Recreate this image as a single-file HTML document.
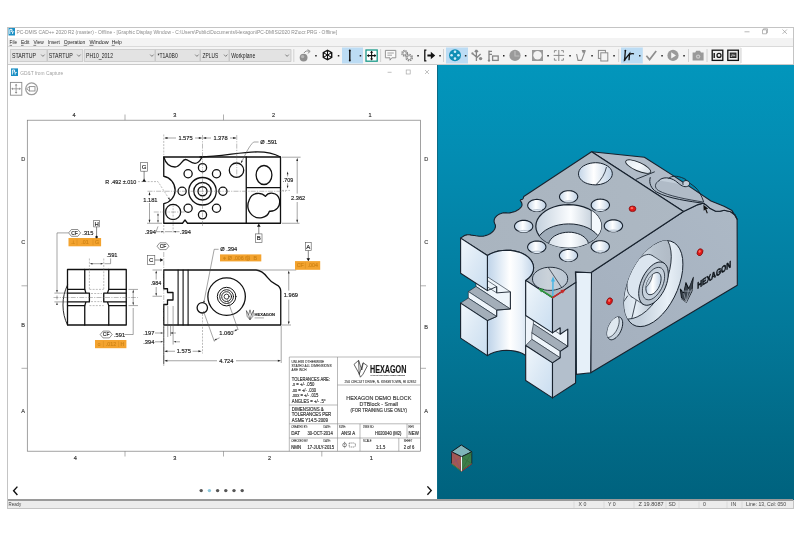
<!DOCTYPE html>
<html><head><meta charset="utf-8"><title>PC-DMIS</title>
<style>
html,body{margin:0;padding:0;background:#fff;}
body{width:800px;height:560px;position:relative;overflow:hidden;font-family:"Liberation Sans",sans-serif;}
.a{position:absolute;}
svg{position:absolute;left:0;top:0;overflow:visible;will-change:transform;}
text{font-family:"Liberation Sans",sans-serif;}
</style></head><body>
<!-- window frame -->
<div class="a" style="left:7px;top:27px;width:787px;height:482px;background:#fff;box-shadow:0 0 0 1px #c4c4c4 inset;"></div>
<div class="a" style="left:8px;top:38px;width:785px;height:8px;background:#f3f3f3;"></div>
<div class="a" style="left:8px;top:46px;width:785px;height:18px;background:#fff;border-top:1px solid #dadada;box-sizing:border-box;"></div>
<div class="a" style="left:8px;top:47px;width:733px;height:17px;background:#f4f4f4;"></div>
<!-- teal viewport -->
<div class="a" style="left:437px;top:65px;width:357px;height:435px;background:linear-gradient(180deg,#0296bc 0%,#038db3 20%,#03799a 60%,#016a87 85%,#00627e 100%);"></div>
<div class="a" style="left:437px;top:65px;width:1px;height:435px;background:#0b6a86;"></div>
<!-- sub window -->
<div class="a" style="left:8px;top:64px;width:785px;height:1px;background:#c9c9c9;"></div>
<div class="a" style="left:8px;top:65px;width:429px;height:435px;background:#fff;"></div>
<!-- status bar -->
<div class="a" style="left:8px;top:499px;width:785px;height:2px;background:#9a9a9a;"></div>
<div class="a" style="left:8px;top:501px;width:785px;height:7px;background:#ececec;"></div>
<svg width="800" height="560" viewBox="0 0 800 560">
<!-- title bar -->
<rect x="8.5" y="28" width="6.5" height="7.5" fill="#1b8fc4"/>
<path d="M9.8 34v-4.6h2.2v2h-1.2M12.6 34v-2.2h1.6" stroke="#fff" stroke-width="0.9" fill="none"/>
<text x="16.5" y="34.2" font-size="5.6" fill="#8a8a8a" textLength="320.5" lengthAdjust="spacingAndGlyphs">PC-DMIS CAD++ 2020 R2 (master) - Offline - [Graphic Display Window - C:\Users\Public\Documents\Hexagon\PC-DMIS\2020 R2\ocr.PRG - Offline]</text>
<g stroke="#9a9a9a" stroke-width="0.7" fill="none">
<path d="M744.5 31.8h5"/>
<path d="M762.5 29.8h4v4h-4zM763.5 29.8v-1h4v4h-1"/>
<path d="M782.5 29.5l4.4 4.4M786.9 29.5l-4.4 4.4"/>
</g>
<!-- menu -->
<g font-size="5.9" fill="#1c1c1c">
<text x="9.6" y="44.4" textLength="7.4" lengthAdjust="spacingAndGlyphs">File</text>
<text x="21" y="44.4" textLength="8.4" lengthAdjust="spacingAndGlyphs">Edit</text>
<text x="33.4" y="44.4" textLength="10.4" lengthAdjust="spacingAndGlyphs">View</text>
<text x="48" y="44.4" textLength="11.8" lengthAdjust="spacingAndGlyphs">Insert</text>
<text x="63.7" y="44.4" textLength="21.6" lengthAdjust="spacingAndGlyphs">Operation</text>
<text x="89.4" y="44.4" textLength="19.4" lengthAdjust="spacingAndGlyphs">Window</text>
<text x="111.7" y="44.4" textLength="10" lengthAdjust="spacingAndGlyphs">Help</text>
</g>
<g stroke="#1c1c1c" stroke-width="0.5"><path d="M9.6 45.4h2.4M21 45.4h2.6M33.4 45.4h2.8M48 45.4h1.2M63.7 45.4h3.4M89.4 45.4h4M111.7 45.4h3"/></g>
<!-- combos -->
<g fill="#e3e3e3" stroke="#b9b9b9" stroke-width="0.6">
<rect x="10.6" y="49.7" width="36.4" height="11.8"/>
<rect x="47.4" y="49.7" width="35.4" height="11.8"/>
<rect x="84.2" y="49.7" width="70.8" height="11.8"/>
<rect x="155.4" y="49.7" width="44.6" height="11.8"/>
<rect x="200.4" y="49.7" width="28.6" height="11.8"/>
<rect x="229.4" y="49.7" width="61.6" height="11.8"/>
</g>
<g font-size="7.8" fill="#222">
<text x="12" y="57.9" textLength="24" lengthAdjust="spacingAndGlyphs">STARTUP</text>
<text x="48.8" y="57.9" textLength="24" lengthAdjust="spacingAndGlyphs">STARTUP</text>
<text x="86" y="57.9" textLength="27" lengthAdjust="spacingAndGlyphs">PH10_2012</text>
<text x="157.5" y="57.9" textLength="20.2" lengthAdjust="spacingAndGlyphs">*T1A0B0</text>
<text x="202.6" y="57.9" textLength="15.6" lengthAdjust="spacingAndGlyphs">ZPLUS</text>
<text x="231.2" y="57.9" textLength="24" lengthAdjust="spacingAndGlyphs">Workplane</text>
</g>
<g stroke="#555" stroke-width="0.7" fill="none">
<path d="M41.2 54.6l1.7 1.8 1.7-1.8"/>
<path d="M77.2 54.6l1.7 1.8 1.7-1.8"/>
<path d="M150.2 54.6l1.7 1.8 1.7-1.8"/>
<path d="M195.2 54.6l1.7 1.8 1.7-1.8"/>
<path d="M224 54.6l1.7 1.8 1.7-1.8"/>
<path d="M285.4 54.6l1.7 1.8 1.7-1.8"/>
</g>
<!-- toolbar highlights -->
<g fill="#bcdcf4">
<rect x="342" y="47.5" width="21" height="16"/>
<rect x="446" y="47.5" width="22" height="16"/>
<rect x="621" y="47.5" width="21.8" height="16"/>
</g>
<!-- separators -->
<g stroke="#c9c9c9" stroke-width="0.8">
<path d="M293.8 49v13M380.6 49v13M443.5 49v13M618.6 49v13M688.5 49v13M707 49v13M741 48v15"/>
</g>
<!-- dropdown dots -->
<g fill="#222">
<rect x="315.2" y="55" width="1.5" height="1.5"/><rect x="337.8" y="55" width="1.5" height="1.5"/><rect x="359.7" y="55" width="1.5" height="1.5"/>
<rect x="417.3" y="55" width="1.5" height="1.5"/><rect x="439.3" y="55" width="1.5" height="1.5"/><rect x="464.9" y="55" width="1.5" height="1.5"/>
<rect x="503" y="55" width="1.5" height="1.5"/><rect x="524.9" y="55" width="1.5" height="1.5"/><rect x="547.3" y="55" width="1.5" height="1.5"/>
<rect x="569.3" y="55" width="1.5" height="1.5"/><rect x="591.3" y="55" width="1.5" height="1.5"/><rect x="613.3" y="55" width="1.5" height="1.5"/>
<rect x="639" y="55" width="1.5" height="1.5"/><rect x="661.3" y="55" width="1.5" height="1.5"/><rect x="683.3" y="55" width="1.5" height="1.5"/>
</g>
<!-- icons -->
<!-- 1 grey ball + arrow -->
<circle cx="303.6" cy="57.6" r="3.9" fill="#8e8e8e"/><circle cx="302.6" cy="56.6" r="1.7" fill="#b5b5b5"/>
<path d="M304 53c1-2 3.5-2.6 5.6-1.6M307.6 49.6l2.6 1.8-2.4 2" stroke="#8e8e8e" stroke-width="1" fill="none"/>
<!-- 2 hex wheel -->
<path d="M327.5 49.4l4.9 2.8v5.6l-4.9 2.8-4.9-2.8v-5.6z" fill="#111"/>
<circle cx="327.5" cy="55" r="3.6" fill="#f4f4f4"/>
<path d="M327.5 51v8M324 53l7 4M331 53l-7 4" stroke="#111" stroke-width="1"/>
<circle cx="327.5" cy="55" r="1.1" fill="#111"/>
<!-- 3 vertical bar -->
<path d="M349.8 50.6v9.6" stroke="#111" stroke-width="1.4"/><circle cx="349.8" cy="50.6" r="1" fill="#111"/><circle cx="349.8" cy="60.4" r="1" fill="#111"/>
<!-- 4 fit -->
<rect x="366" y="50" width="11.2" height="11.2" fill="#fff" stroke="#1a9a8a" stroke-width="1.3"/>
<path d="M371.6 51.6v8M367.6 55.6h8" stroke="#111" stroke-width="1.1"/>
<path d="M371.6 50.8l1.6 2h-3.2zM371.6 60.4l1.6-2h-3.2zM366.9 55.6l2-1.6v3.2zM376.3 55.6l-2-1.6v3.2z" fill="#111"/>
<!-- 5 comment -->
<path d="M385.4 50.4h10.4v7.4h-4l-1.8 2.4v-2.4h-4.6z" fill="#fafafa" stroke="#8a8a8a" stroke-width="0.9"/>
<path d="M387.4 53h6.4M387.4 55.2h4.6" stroke="#8a8a8a" stroke-width="0.8"/>
<!-- 6 gears -->
<g stroke="#8a8a8a" fill="#f4f4f4"><circle cx="404.6" cy="53.2" r="2.7" stroke-width="1.5" stroke-dasharray="1.4 0.8"/><circle cx="404.6" cy="53.2" r="1.7" stroke-width="0.9"/><circle cx="409.2" cy="57.6" r="3.1" stroke-width="1.5" stroke-dasharray="1.5 0.9"/><circle cx="409.2" cy="57.6" r="2" stroke-width="0.9"/></g>
<!-- 7 |-> -->
<path d="M426.4 50.2h-1.6v10.6h1.6" stroke="#111" stroke-width="1.3" fill="none"/><path d="M427.4 55.5h5.4" stroke="#111" stroke-width="2"/><path d="M430.8 51.8l4.4 3.7-4.4 3.7z" fill="#111"/>
<!-- 8 teal circle -->
<circle cx="455" cy="55.2" r="6" fill="#108fb5"/>
<g fill="#cfeefa"><circle cx="455" cy="51.8" r="1.3"/><circle cx="455" cy="58.6" r="1.3"/><circle cx="451.6" cy="55.2" r="1.3"/><circle cx="458.4" cy="55.2" r="1.3"/></g>
<!-- 9 usb-like -->
<g stroke="#858585" stroke-width="1.3" fill="none"><path d="M476.4 50v11M476.4 50l-1.6 2M476.4 50l1.6 2M472.4 53.6l4 3.4M480.6 54l-4.2 4"/></g><circle cx="480.6" cy="58.6" r="1.7" fill="#8a8a8a"/><circle cx="472.4" cy="53.4" r="1.1" fill="#8a8a8a"/>
<!-- 10 probe/flag -->
<g stroke="#858585" stroke-width="1.3" fill="none"><path d="M489 50.4v10.4M489 51.4h3M489 54.4h3"/><rect x="492.6" y="56" width="5.6" height="4.4"/></g><circle cx="489" cy="60.6" r="1.2" fill="#8a8a8a"/>
<!-- 11 grey sphere -->
<circle cx="515" cy="55.4" r="5.6" fill="#9a9a9a"/><path d="M515 51v5h4.4" stroke="#bdbdbd" stroke-width="1.2" fill="none"/>
<!-- 12 square -->
<rect x="532" y="50" width="11" height="11" fill="#9a9a9a"/><circle cx="537.5" cy="55.2" r="4.2" fill="#f4f4f4"/>
<!-- 13 grid -->
<g stroke="#8a8a8a" stroke-width="1" fill="none"><path d="M558.8 50v11M553.6 55.4h10.6M554.4 52.6v-2h2.2M563.4 52.6v-2h-2.2M554.4 58.2v2h2.2M563.4 58.2v2h-2.2"/></g>
<!-- 14 path -->
<g stroke="#8a8a8a" stroke-width="1.1" fill="none"><path d="M576.6 54l1.4 6.4h3.6l3.6-9.6"/></g><path d="M581.6 50h4.4l-3 3.6z" fill="#8a8a8a"/>
<!-- 15 copy -->
<g stroke="#8a8a8a" stroke-width="1" fill="#f4f4f4"><rect x="598.4" y="50.4" width="7" height="8"/><rect x="600.8" y="52.8" width="7" height="8.2"/></g>
<!-- 16 lr -->
<path d="M625.4 50.4l-0.8 9.6 5-6.4-0.6 6.6M629.4 54.4c1.6-1 3-1 4.6-0.6" stroke="#111" stroke-width="1.3" fill="none"/><circle cx="625.4" cy="50.6" r="0.9" fill="#111"/><circle cx="624.6" cy="60" r="0.9" fill="#111"/>
<!-- 17 check -->
<path d="M646.4 55.8l3.2 3.8 6.6-8.6" stroke="#8e8e8e" stroke-width="1.7" fill="none"/>
<!-- 18 play -->
<circle cx="673" cy="55.4" r="5.6" fill="#9a9a9a"/><path d="M671.2 52.2l4.8 3.2-4.8 3.2z" fill="#f4f4f4"/>
<!-- 19 camera -->
<path d="M692.6 52.4h2.6l1-1.6h3.8l1 1.6h2.6v8.2h-11z" fill="#9a9a9a"/><circle cx="698.1" cy="56.6" r="2.2" fill="#c9c9c9"/><circle cx="698.1" cy="56.6" r="0.9" fill="#9a9a9a"/>
<!-- 20,21 -->
<rect x="712.2" y="50.2" width="10.6" height="10.2" fill="#ededed" stroke="#111" stroke-width="1.3"/>
<path d="M714.2 53v5" stroke="#111" stroke-width="1.4"/><circle cx="719" cy="55.4" r="2" fill="none" stroke="#111" stroke-width="1.2"/>
<rect x="727.8" y="50.2" width="10.6" height="10.2" fill="#ededed" stroke="#111" stroke-width="1.3"/>
<rect x="730.2" y="53" width="5.8" height="4.6" fill="#555" stroke="#111" stroke-width="0.8"/><path d="M731 57l1.8-2.4 1.4 1.4 1-1" stroke="#eee" stroke-width="0.6" fill="none"/>
<!-- sub-window title -->
<rect x="11" y="68.4" width="7" height="7.6" fill="#1b8fc4"/>
<path d="M12.4 74.6v-4.6h2.2v2h-1.2M15.2 74.6v-2.2h1.6" stroke="#fff" stroke-width="0.9" fill="none"/>
<text x="20.2" y="74.6" font-size="5.4" fill="#a2a2a2" textLength="43" lengthAdjust="spacingAndGlyphs">GD&amp;T from Capture</text>
<g stroke="#a8a8a8" stroke-width="0.7" fill="none">
<path d="M387.6 72.3h4"/><rect x="406.2" y="70" width="4" height="4"/><path d="M425 70l4 4M429 70l-4 4"/>
</g>
<!-- pan + rotate icons -->
<rect x="10.4" y="82.4" width="11.4" height="12.8" fill="#fff" stroke="#8c8c8c" stroke-width="0.9"/>
<path d="M16.1 84.6v8.4M12 88.8h8.2" stroke="#8c8c8c" stroke-width="0.8"/>
<path d="M16.1 83.8l1.3 1.7h-2.6zM16.1 93.8l1.3-1.7h-2.6zM11.2 88.8l1.7-1.3v2.6zM21 88.8l-1.7-1.3v2.6z" fill="#8c8c8c"/>
<circle cx="31.6" cy="88.8" r="5.9" fill="#fff" stroke="#9c9c9c" stroke-width="1.3"/>
<rect x="29.4" y="86.6" width="5.6" height="4.4" fill="#fff" stroke="#8c8c8c" stroke-width="0.9"/>
<path d="M26.6 88.8l2.8-2.2M26.6 88.8l2.8 2.2" stroke="#8c8c8c" stroke-width="0.8"/>
<!-- nav arrows -->
<path d="M17.4 486.6l-3.8 4.2 3.8 4.2" stroke="#111" stroke-width="1.4" fill="none"/>
<path d="M427.4 486.4l3.8 4.2-3.8 4.2" stroke="#111" stroke-width="1.4" fill="none"/>
<!-- pager dots -->
<g fill="#555"><circle cx="201.2" cy="490.6" r="1.7"/><circle cx="217.6" cy="490.6" r="1.7"/><circle cx="225.8" cy="490.6" r="1.7"/><circle cx="234" cy="490.6" r="1.7"/><circle cx="242.2" cy="490.6" r="1.7"/></g>
<circle cx="209.4" cy="490.6" r="1.7" fill="#8cc8dc"/>
<!-- status bar -->
<g font-size="5.2" fill="#444">
<text x="8.6" y="506.4" textLength="12.6" lengthAdjust="spacingAndGlyphs">Ready</text>
<text x="578.6" y="506.4">X 0</text>
<text x="608" y="506.4">Y 0</text>
<text x="638.6" y="506.4" textLength="25" lengthAdjust="spacingAndGlyphs">Z 19.8087</text>
<text x="668.6" y="506.4" textLength="7" lengthAdjust="spacingAndGlyphs">SD</text>
<text x="703" y="506.4">0</text>
<text x="731" y="506.4">IN</text>
<text x="746" y="506.4" textLength="40" lengthAdjust="spacingAndGlyphs">Line: 13, Col: 050</text>
</g>
<g stroke="#d0d0d0" stroke-width="0.6"><path d="M574 501.5v6.5M604 501.5v6.5M634 501.5v6.5M666 501.5v6.5M679 501.5v6.5M699 501.5v6.5M727 501.5v6.5M742 501.5v6.5"/></g>
</svg>

<svg width="800" height="560" viewBox="0 0 800 560">
<defs>
<linearGradient id="gEnd" x1="0" y1="0" x2="1" y2="1"><stop offset="0" stop-color="#f1f7fc"/><stop offset="0.5" stop-color="#dce9f5"/><stop offset="1" stop-color="#c9ddf0"/></linearGradient>
<linearGradient id="gCyl" gradientUnits="userSpaceOnUse" x1="487" y1="0" x2="533" y2="0"><stop offset="0" stop-color="#bdd2e8"/><stop offset="0.2" stop-color="#d6e4f2"/><stop offset="0.5" stop-color="#ffffff"/><stop offset="0.75" stop-color="#e9f1f9"/><stop offset="1" stop-color="#c4d6e9"/></linearGradient>
<linearGradient id="gRight" gradientUnits="userSpaceOnUse" x1="553" y1="380" x2="737" y2="220"><stop offset="0" stop-color="#a2aebc"/><stop offset="0.5" stop-color="#a7b3c1"/><stop offset="1" stop-color="#acb8c5"/></linearGradient>
<linearGradient id="gTop" gradientUnits="userSpaceOnUse" x1="461" y1="240" x2="680" y2="180"><stop offset="0" stop-color="#a9b4bf"/><stop offset="1" stop-color="#adb8c3"/></linearGradient>
<linearGradient id="gHole" x1="0" y1="0" x2="1" y2="0"><stop offset="0" stop-color="#c3d5e8"/><stop offset="0.45" stop-color="#ffffff"/><stop offset="1" stop-color="#bccfe3"/></linearGradient>
<linearGradient id="gBore" gradientUnits="userSpaceOnUse" x1="535" y1="0" x2="600" y2="0"><stop offset="0" stop-color="#c2cfdc"/><stop offset="0.55" stop-color="#fbfdff"/><stop offset="1" stop-color="#b4c2d0"/></linearGradient>
</defs>
<polygon points="590.7,272.7 683.5,211.5 698.0,204.6 702.8,203.2 706.0,204.8 710.3,208.6 715.7,211.2 720.0,211.3 724.2,210.2 730.7,211.8 735.0,215.0 737.1,219.3 737.3,285.2 590.7,372.7" fill="url(#gRight)" stroke="#18222e" stroke-width="1.1" stroke-linejoin="round" />
<polygon points="575.8,272.5 591.5,272.5 590.7,372.7 576.4,374.4" fill="#e6f0f9" stroke="#18222e" stroke-width="1.1" stroke-linejoin="round" />
<polygon points="591.6,151.7 644.4,157.2 673.6,175.9 693.0,188.9 711.0,201.0 724.0,206.3 732.0,210.4 737.1,219.3 735.0,215.0 730.7,211.8 724.2,210.2 720.0,211.3 715.7,211.2 710.3,208.6 706.0,204.8 702.8,203.2 698.0,204.6 683.5,211.5" fill="#b0bbc7" stroke="#18222e" stroke-width="1.1" stroke-linejoin="round" />
<polygon points="460.6,238.1 464.5,235.5 464.9,235.4 465.3,235.3 465.9,235.1 466.6,234.9 467.3,234.8 468.0,234.7 468.7,234.8 469.5,234.8 470.3,234.9 471.2,235.1 472.2,235.2 473.3,235.4 474.5,235.5 476.0,235.8 477.5,236.0 479.1,236.2 480.7,236.3 482.1,236.3 483.5,236.1 484.8,235.8 486.1,235.4 487.4,235.0 488.6,234.5 489.6,233.9 490.6,233.4 491.4,232.8 492.2,232.1 492.9,231.5 493.5,230.8 494.0,230.1 494.5,229.5 494.8,228.8 495.1,228.1 495.3,227.5 495.4,226.8 495.5,226.1 495.4,225.3 495.2,224.6 494.8,223.8 494.5,223.1 494.3,222.3 494.1,221.6 494.1,220.9 494.2,220.2 494.3,219.6 494.5,218.9 494.8,218.3 495.1,217.7 495.6,217.1 496.1,216.5 496.7,215.9 497.4,215.4 498.1,214.9 498.8,214.4 499.5,214.1 500.3,213.7 501.0,213.5 501.8,213.2 502.6,213.0 503.5,212.9 504.4,212.8 505.4,212.9 506.4,212.9 507.4,213.0 508.5,213.0 509.6,212.9 510.8,212.6 512.2,212.3 513.5,211.9 514.9,211.4 516.1,210.9 517.2,210.3 518.2,209.8 519.1,209.1 519.9,208.4 520.6,207.7 521.2,207.0 521.6,206.3 521.9,205.7 522.0,205.0 522.0,204.4 521.9,203.8 521.8,203.2 521.6,202.7 521.4,202.2 521.1,201.8 520.8,201.4 520.5,201.0 520.3,200.6 520.3,200.3 520.5,200.0 520.9,199.8 521.4,199.6 521.9,199.4 522.4,199.2 522.8,198.9 523.1,198.5 523.3,198.1 523.4,197.6 523.6,197.1 523.7,196.7 523.8,196.5 591.6,151.7 683.5,211.5 590.7,272.7 575.4,271.9 575.9,282.4 552.5,297.9 525.7,280.4 528.4,278.3 530.7,275.9 532.3,273.3 533.3,270.6 533.6,267.8 533.3,265.1 532.3,262.4 530.7,259.8 528.5,257.4 525.7,255.3 522.5,253.5 518.9,252.1 514.9,251.1 510.8,250.4 506.6,250.2 502.3,250.5 498.2,251.1 494.3,252.2 490.6,253.7 487.4,255.5" fill="url(#gTop)" stroke="#18222e" stroke-width="1.1" stroke-linejoin="round" />
<polygon points="525.7,280.4 528.4,278.3 530.7,275.9 532.3,273.3 533.3,270.6 533.6,267.8 533.3,265.1 532.3,262.4 530.7,259.8 528.5,257.4 525.7,255.3 522.5,253.5 518.9,252.1 514.9,251.1 510.8,250.4 506.6,250.2 502.3,250.5 498.2,251.1 494.3,252.2 490.6,253.7 487.4,255.5 487.4,355.6 490.6,353.7 494.3,352.3 498.2,351.2 502.3,350.5 506.6,350.3 510.8,350.5 514.9,351.1 518.9,352.1 522.5,353.6 525.7,355.4 528.5,357.5 530.7,359.8 532.3,362.4 533.3,365.1 533.6,367.9 533.3,370.6 532.3,373.4 530.7,375.9 528.4,378.3 525.7,380.5" fill="url(#gCyl)" stroke="#18222e" stroke-width="1.1" stroke-linejoin="round" />
<polygon points="476.0,269.4 510.4,291.8 510.4,309.0 476.0,286.5" fill="#eef5fb" stroke="#18222e" stroke-width="0.6" stroke-linejoin="round" />
<polygon points="468.3,268.1 496.7,286.6 496.7,292.9 468.3,274.4" fill="#eef5fb" stroke="#18222e" stroke-width="0.6" stroke-linejoin="round" />
<polygon points="476.0,286.5 510.4,309.0 496.7,310.1 468.3,291.6" fill="#a3aeb9" stroke="#18222e" stroke-width="0.6" stroke-linejoin="round" />
<polygon points="468.3,291.6 496.7,310.1 496.7,316.5 468.3,298.1" fill="#eef5fb" stroke="#18222e" stroke-width="0.6" stroke-linejoin="round" />
<polygon points="468.3,298.1 496.7,316.5 487.4,320.6 460.6,303.1" fill="#a3aeb9" stroke="#18222e" stroke-width="0.6" stroke-linejoin="round" />
<polygon points="460.6,238.1 487.4,255.5 487.4,290.6 460.6,273.2" fill="url(#gEnd)" stroke="#18222e" stroke-width="1.1" stroke-linejoin="round" />
<polygon points="460.6,303.1 487.4,320.6 487.4,355.6 460.6,338.1" fill="url(#gEnd)" stroke="#18222e" stroke-width="1.1" stroke-linejoin="round" />
<path d="M487.4,290.6 L496.7,286.6 L496.7,292.9 L510.4,291.8 L510.4,309.0 L496.7,310.1 L496.7,316.5 L487.4,320.6" fill="none" stroke="#18222e" stroke-width="0.9" stroke-linejoin="round" stroke-linecap="round" />
<polygon points="525.7,315.5 552.5,332.9 560.2,327.8 560.2,334.2 567.8,329.1 567.8,346.3 560.2,351.4 560.2,357.8 552.5,362.9 525.7,345.5" fill="#eef4fa" stroke="none" stroke-width="0" stroke-linejoin="round" />
<polygon points="533.4,306.7 567.8,329.1 567.8,346.3 533.4,323.9" fill="#eef5fb" stroke="#18222e" stroke-width="0.6" stroke-linejoin="round" />
<polygon points="531.8,309.4 560.2,327.8 560.2,334.2 531.8,315.7" fill="#eef5fb" stroke="#18222e" stroke-width="0.6" stroke-linejoin="round" />
<polygon points="533.4,323.9 567.8,346.3 560.2,351.4 531.8,332.9" fill="#a3aeb9" stroke="#18222e" stroke-width="0.6" stroke-linejoin="round" />
<polygon points="531.8,332.9 560.2,351.4 560.2,357.8 531.8,339.3" fill="#eef5fb" stroke="#18222e" stroke-width="0.6" stroke-linejoin="round" />
<polygon points="531.8,339.3 560.2,357.8 552.5,362.9 525.7,345.5" fill="#a3aeb9" stroke="#18222e" stroke-width="0.6" stroke-linejoin="round" />
<polygon points="525.7,280.4 552.5,297.9 552.5,332.9 525.7,315.5" fill="url(#gEnd)" stroke="#18222e" stroke-width="1.1" stroke-linejoin="round" />
<polygon points="525.7,345.5 552.5,362.9 552.5,397.9 525.7,380.5" fill="url(#gEnd)" stroke="#18222e" stroke-width="1.1" stroke-linejoin="round" />
<polygon points="552.5,297.9 575.9,282.4 575.6,383.0 552.5,397.9 552.5,362.9 560.2,357.8 560.2,351.4 567.8,346.3 567.8,329.1 560.2,334.2 560.2,327.8 552.5,332.9" fill="#b3bfcc" stroke="#18222e" stroke-width="1.1" stroke-linejoin="round" />
<polygon points="606.8,200.8 607.7,201.5 608.5,202.3 609.0,203.2 609.4,204.1 609.5,205.1 609.4,206.0 609.0,206.9 608.5,207.8 607.7,208.6 606.8,209.3 605.7,209.9 604.5,210.4 603.2,210.8 601.8,211.0 600.3,211.1 598.9,211.0 597.5,210.8 596.2,210.5 595.0,210.0 593.9,209.4 592.9,208.7 592.2,207.9 591.6,207.0 591.3,206.1 591.2,205.1 591.3,204.2 591.6,203.3 592.2,202.4 592.9,201.6 593.9,200.9 595.0,200.3 596.2,199.8 597.5,199.4 598.9,199.2 600.3,199.1 601.8,199.2 603.2,199.4 604.5,199.7 605.7,200.2" fill="url(#gHole)" stroke="#18222e" stroke-width="1.1" stroke-linejoin="round" />
<clipPath id="c1"><polygon points="606.8,200.8 607.7,201.5 608.5,202.3 609.0,203.2 609.4,204.1 609.5,205.1 609.4,206.0 609.0,206.9 608.5,207.8 607.7,208.6 606.8,209.3 605.7,209.9 604.5,210.4 603.2,210.8 601.8,211.0 600.3,211.1 598.9,211.0 597.5,210.8 596.2,210.5 595.0,210.0 593.9,209.4 592.9,208.7 592.2,207.9 591.6,207.0 591.3,206.1 591.2,205.1 591.3,204.2 591.6,203.3 592.2,202.4 592.9,201.6 593.9,200.9 595.0,200.3 596.2,199.8 597.5,199.4 598.9,199.2 600.3,199.1 601.8,199.2 603.2,199.4 604.5,199.7 605.7,200.2"/></clipPath>
<polygon points="606.8,211.0 607.7,211.7 608.5,212.5 609.0,213.4 609.4,214.3 609.5,215.2 609.4,216.1 609.0,217.1 608.5,217.9 607.7,218.7 606.8,219.5 605.7,220.1 604.5,220.6 603.2,220.9 601.8,221.2 600.3,221.2 598.9,221.2 597.5,221.0 596.2,220.6 595.0,220.1 593.9,219.5 592.9,218.8 592.2,218.0 591.6,217.2 591.3,216.2 591.2,215.3 591.3,214.4 591.6,213.5 592.2,212.6 592.9,211.8 593.9,211.1 595.0,210.4 596.2,209.9 597.5,209.6 598.9,209.4 600.3,209.3 601.8,209.3 603.2,209.6 604.5,209.9 605.7,210.4" fill="#e3edf7" stroke="#7f8fa0" stroke-width="0.5" stroke-linejoin="round" clip-path="url(#c1)"/>
<polygon points="619.9,221.5 620.9,222.3 621.6,223.1 622.1,223.9 622.5,224.8 622.6,225.8 622.5,226.7 622.1,227.6 621.6,228.5 620.8,229.3 619.9,230.0 618.8,230.6 617.6,231.1 616.3,231.5 614.9,231.7 613.4,231.8 612.0,231.7 610.6,231.5 609.3,231.2 608.1,230.7 607.0,230.1 606.0,229.4 605.3,228.6 604.7,227.7 604.4,226.8 604.3,225.9 604.4,224.9 604.8,224.0 605.3,223.1 606.1,222.3 607.0,221.6 608.1,221.0 609.3,220.5 610.6,220.1 612.0,219.9 613.5,219.8 614.9,219.9 616.3,220.1 617.6,220.5 618.8,220.9" fill="url(#gHole)" stroke="#18222e" stroke-width="1.1" stroke-linejoin="round" />
<clipPath id="c2"><polygon points="619.9,221.5 620.9,222.3 621.6,223.1 622.1,223.9 622.5,224.8 622.6,225.8 622.5,226.7 622.1,227.6 621.6,228.5 620.8,229.3 619.9,230.0 618.8,230.6 617.6,231.1 616.3,231.5 614.9,231.7 613.4,231.8 612.0,231.7 610.6,231.5 609.3,231.2 608.1,230.7 607.0,230.1 606.0,229.4 605.3,228.6 604.7,227.7 604.4,226.8 604.3,225.9 604.4,224.9 604.8,224.0 605.3,223.1 606.1,222.3 607.0,221.6 608.1,221.0 609.3,220.5 610.6,220.1 612.0,219.9 613.5,219.8 614.9,219.9 616.3,220.1 617.6,220.5 618.8,220.9"/></clipPath>
<polygon points="619.9,231.7 620.9,232.4 621.6,233.2 622.1,234.1 622.5,235.0 622.6,235.9 622.5,236.9 622.1,237.8 621.6,238.7 620.8,239.5 619.9,240.2 618.8,240.8 617.6,241.3 616.3,241.7 614.9,241.9 613.4,242.0 612.0,241.9 610.6,241.7 609.3,241.3 608.1,240.8 607.0,240.2 606.0,239.5 605.3,238.7 604.7,237.9 604.4,237.0 604.3,236.0 604.4,235.1 604.8,234.2 605.3,233.3 606.1,232.5 607.0,231.8 608.1,231.2 609.3,230.7 610.6,230.3 612.0,230.1 613.5,230.0 614.9,230.1 616.3,230.3 617.6,230.6 618.8,231.1" fill="#e3edf7" stroke="#7f8fa0" stroke-width="0.5" stroke-linejoin="round" clip-path="url(#c2)"/>
<polygon points="606.7,242.4 607.7,243.1 608.4,243.9 609.0,244.8 609.3,245.7 609.4,246.6 609.3,247.6 608.9,248.5 608.4,249.3 607.6,250.1 606.7,250.9 605.6,251.5 604.4,252.0 603.1,252.3 601.7,252.6 600.2,252.7 598.8,252.6 597.4,252.4 596.1,252.0 594.9,251.5 593.8,250.9 592.9,250.2 592.1,249.4 591.6,248.6 591.2,247.6 591.1,246.7 591.2,245.8 591.6,244.9 592.1,244.0 592.9,243.2 593.8,242.5 594.9,241.8 596.1,241.4 597.4,241.0 598.8,240.8 600.3,240.7 601.7,240.7 603.1,241.0 604.4,241.3 605.6,241.8" fill="url(#gHole)" stroke="#18222e" stroke-width="1.1" stroke-linejoin="round" />
<clipPath id="c3"><polygon points="606.7,242.4 607.7,243.1 608.4,243.9 609.0,244.8 609.3,245.7 609.4,246.6 609.3,247.6 608.9,248.5 608.4,249.3 607.6,250.1 606.7,250.9 605.6,251.5 604.4,252.0 603.1,252.3 601.7,252.6 600.2,252.7 598.8,252.6 597.4,252.4 596.1,252.0 594.9,251.5 593.8,250.9 592.9,250.2 592.1,249.4 591.6,248.6 591.2,247.6 591.1,246.7 591.2,245.8 591.6,244.9 592.1,244.0 592.9,243.2 593.8,242.5 594.9,241.8 596.1,241.4 597.4,241.0 598.8,240.8 600.3,240.7 601.7,240.7 603.1,241.0 604.4,241.3 605.6,241.8"/></clipPath>
<polygon points="606.7,252.6 607.7,253.3 608.4,254.1 609.0,254.9 609.3,255.8 609.4,256.8 609.3,257.7 608.9,258.6 608.4,259.5 607.6,260.3 606.7,261.0 605.6,261.6 604.4,262.1 603.1,262.5 601.7,262.7 600.2,262.8 598.8,262.7 597.4,262.5 596.1,262.2 594.9,261.7 593.8,261.1 592.9,260.4 592.1,259.6 591.6,258.7 591.2,257.8 591.1,256.9 591.2,255.9 591.6,255.0 592.1,254.1 592.9,253.3 593.8,252.6 594.9,252.0 596.1,251.5 597.4,251.1 598.8,250.9 600.3,250.8 601.7,250.9 603.1,251.1 604.4,251.5 605.6,252.0" fill="#e3edf7" stroke="#7f8fa0" stroke-width="0.5" stroke-linejoin="round" clip-path="url(#c3)"/>
<polygon points="575.0,251.2 575.9,251.9 576.6,252.7 577.2,253.5 577.5,254.5 577.6,255.4 577.5,256.3 577.2,257.2 576.6,258.1 575.9,258.9 575.0,259.6 573.9,260.3 572.6,260.7 571.3,261.1 569.9,261.3 568.5,261.4 567.1,261.4 565.7,261.1 564.3,260.8 563.1,260.3 562.0,259.7 561.1,259.0 560.3,258.2 559.8,257.3 559.5,256.4 559.4,255.5 559.5,254.5 559.8,253.6 560.4,252.8 561.1,252.0 562.0,251.2 563.1,250.6 564.4,250.1 565.7,249.8 567.1,249.5 568.5,249.4 569.9,249.5 571.3,249.7 572.7,250.1 573.9,250.6" fill="url(#gHole)" stroke="#18222e" stroke-width="1.1" stroke-linejoin="round" />
<clipPath id="c4"><polygon points="575.0,251.2 575.9,251.9 576.6,252.7 577.2,253.5 577.5,254.5 577.6,255.4 577.5,256.3 577.2,257.2 576.6,258.1 575.9,258.9 575.0,259.6 573.9,260.3 572.6,260.7 571.3,261.1 569.9,261.3 568.5,261.4 567.1,261.4 565.7,261.1 564.3,260.8 563.1,260.3 562.0,259.7 561.1,259.0 560.3,258.2 559.8,257.3 559.5,256.4 559.4,255.5 559.5,254.5 559.8,253.6 560.4,252.8 561.1,252.0 562.0,251.2 563.1,250.6 564.4,250.1 565.7,249.8 567.1,249.5 568.5,249.4 569.9,249.5 571.3,249.7 572.7,250.1 573.9,250.6"/></clipPath>
<polygon points="575.0,261.3 575.9,262.0 576.6,262.8 577.2,263.7 577.5,264.6 577.6,265.5 577.5,266.5 577.2,267.4 576.6,268.3 575.9,269.1 575.0,269.8 573.9,270.4 572.6,270.9 571.3,271.3 569.9,271.5 568.5,271.6 567.1,271.5 565.7,271.3 564.3,271.0 563.1,270.5 562.0,269.9 561.1,269.2 560.3,268.4 559.8,267.5 559.5,266.6 559.4,265.6 559.5,264.7 559.8,263.8 560.4,262.9 561.1,262.1 562.0,261.4 563.1,260.8 564.4,260.3 565.7,259.9 567.1,259.7 568.5,259.6 569.9,259.7 571.3,259.9 572.7,260.2 573.9,260.7" fill="#e3edf7" stroke="#7f8fa0" stroke-width="0.5" stroke-linejoin="round" clip-path="url(#c4)"/>
<polygon points="543.2,242.7 544.2,243.4 544.9,244.2 545.5,245.1 545.8,246.0 545.9,246.9 545.8,247.9 545.5,248.8 544.9,249.7 544.2,250.5 543.2,251.2 542.1,251.8 540.9,252.3 539.6,252.7 538.2,252.9 536.8,253.0 535.3,252.9 533.9,252.7 532.6,252.3 531.4,251.9 530.3,251.3 529.4,250.5 528.6,249.8 528.1,248.9 527.7,248.0 527.6,247.0 527.7,246.1 528.1,245.2 528.6,244.3 529.4,243.5 530.3,242.8 531.4,242.2 532.6,241.7 534.0,241.3 535.3,241.1 536.8,241.0 538.2,241.1 539.6,241.3 540.9,241.6 542.2,242.1" fill="url(#gHole)" stroke="#18222e" stroke-width="1.1" stroke-linejoin="round" />
<clipPath id="c5"><polygon points="543.2,242.7 544.2,243.4 544.9,244.2 545.5,245.1 545.8,246.0 545.9,246.9 545.8,247.9 545.5,248.8 544.9,249.7 544.2,250.5 543.2,251.2 542.1,251.8 540.9,252.3 539.6,252.7 538.2,252.9 536.8,253.0 535.3,252.9 533.9,252.7 532.6,252.3 531.4,251.9 530.3,251.3 529.4,250.5 528.6,249.8 528.1,248.9 527.7,248.0 527.6,247.0 527.7,246.1 528.1,245.2 528.6,244.3 529.4,243.5 530.3,242.8 531.4,242.2 532.6,241.7 534.0,241.3 535.3,241.1 536.8,241.0 538.2,241.1 539.6,241.3 540.9,241.6 542.2,242.1"/></clipPath>
<polygon points="543.2,252.9 544.2,253.6 544.9,254.4 545.5,255.3 545.8,256.2 545.9,257.1 545.8,258.0 545.5,259.0 544.9,259.8 544.2,260.6 543.2,261.4 542.1,262.0 540.9,262.5 539.6,262.8 538.2,263.1 536.8,263.1 535.3,263.1 533.9,262.9 532.6,262.5 531.4,262.0 530.3,261.4 529.4,260.7 528.6,259.9 528.1,259.0 527.7,258.1 527.6,257.2 527.7,256.3 528.1,255.3 528.6,254.5 529.4,253.7 530.3,253.0 531.4,252.3 532.6,251.8 534.0,251.5 535.3,251.2 536.8,251.2 538.2,251.2 539.6,251.4 540.9,251.8 542.2,252.3" fill="#e3edf7" stroke="#7f8fa0" stroke-width="0.5" stroke-linejoin="round" clip-path="url(#c5)"/>
<polygon points="530.1,222.0 531.1,222.7 531.8,223.5 532.4,224.4 532.7,225.3 532.8,226.2 532.7,227.2 532.4,228.1 531.8,229.0 531.1,229.8 530.1,230.5 529.0,231.1 527.8,231.6 526.5,232.0 525.1,232.2 523.6,232.3 522.2,232.2 520.8,232.0 519.5,231.6 518.3,231.1 517.2,230.5 516.3,229.8 515.5,229.0 515.0,228.2 514.6,227.3 514.5,226.3 514.6,225.4 515.0,224.5 515.5,223.6 516.3,222.8 517.2,222.1 518.3,221.5 519.5,221.0 520.8,220.6 522.2,220.4 523.7,220.3 525.1,220.4 526.5,220.6 527.8,220.9 529.0,221.4" fill="url(#gHole)" stroke="#18222e" stroke-width="1.1" stroke-linejoin="round" />
<clipPath id="c6"><polygon points="530.1,222.0 531.1,222.7 531.8,223.5 532.4,224.4 532.7,225.3 532.8,226.2 532.7,227.2 532.4,228.1 531.8,229.0 531.1,229.8 530.1,230.5 529.0,231.1 527.8,231.6 526.5,232.0 525.1,232.2 523.6,232.3 522.2,232.2 520.8,232.0 519.5,231.6 518.3,231.1 517.2,230.5 516.3,229.8 515.5,229.0 515.0,228.2 514.6,227.3 514.5,226.3 514.6,225.4 515.0,224.5 515.5,223.6 516.3,222.8 517.2,222.1 518.3,221.5 519.5,221.0 520.8,220.6 522.2,220.4 523.7,220.3 525.1,220.4 526.5,220.6 527.8,220.9 529.0,221.4"/></clipPath>
<polygon points="530.1,232.2 531.1,232.9 531.8,233.7 532.4,234.5 532.7,235.5 532.8,236.4 532.7,237.3 532.4,238.2 531.8,239.1 531.1,239.9 530.1,240.6 529.0,241.3 527.8,241.7 526.5,242.1 525.1,242.3 523.6,242.4 522.2,242.4 520.8,242.1 519.5,241.8 518.3,241.3 517.2,240.7 516.3,240.0 515.5,239.2 515.0,238.3 514.6,237.4 514.5,236.5 514.6,235.5 515.0,234.6 515.5,233.8 516.3,233.0 517.2,232.2 518.3,231.6 519.5,231.1 520.8,230.8 522.2,230.5 523.7,230.4 525.1,230.5 526.5,230.7 527.8,231.1 529.0,231.6" fill="#e3edf7" stroke="#7f8fa0" stroke-width="0.5" stroke-linejoin="round" clip-path="url(#c6)"/>
<polygon points="543.3,201.2 544.3,201.9 545.0,202.7 545.5,203.5 545.9,204.4 546.0,205.4 545.9,206.3 545.5,207.2 545.0,208.1 544.2,208.9 543.3,209.6 542.2,210.2 541.0,210.7 539.7,211.1 538.3,211.3 536.8,211.4 535.4,211.3 534.0,211.1 532.7,210.8 531.5,210.3 530.4,209.7 529.4,209.0 528.7,208.2 528.1,207.3 527.8,206.4 527.7,205.5 527.8,204.5 528.2,203.6 528.7,202.7 529.5,201.9 530.4,201.2 531.5,200.6 532.7,200.1 534.0,199.7 535.4,199.5 536.9,199.4 538.3,199.5 539.7,199.7 541.0,200.1 542.2,200.6" fill="url(#gHole)" stroke="#18222e" stroke-width="1.1" stroke-linejoin="round" />
<clipPath id="c7"><polygon points="543.3,201.2 544.3,201.9 545.0,202.7 545.5,203.5 545.9,204.4 546.0,205.4 545.9,206.3 545.5,207.2 545.0,208.1 544.2,208.9 543.3,209.6 542.2,210.2 541.0,210.7 539.7,211.1 538.3,211.3 536.8,211.4 535.4,211.3 534.0,211.1 532.7,210.8 531.5,210.3 530.4,209.7 529.4,209.0 528.7,208.2 528.1,207.3 527.8,206.4 527.7,205.5 527.8,204.5 528.2,203.6 528.7,202.7 529.5,201.9 530.4,201.2 531.5,200.6 532.7,200.1 534.0,199.7 535.4,199.5 536.9,199.4 538.3,199.5 539.7,199.7 541.0,200.1 542.2,200.6"/></clipPath>
<polygon points="543.3,211.3 544.3,212.0 545.0,212.8 545.5,213.7 545.9,214.6 546.0,215.5 545.9,216.5 545.5,217.4 545.0,218.3 544.2,219.1 543.3,219.8 542.2,220.4 541.0,220.9 539.7,221.3 538.3,221.5 536.8,221.6 535.4,221.5 534.0,221.3 532.7,220.9 531.5,220.5 530.4,219.9 529.4,219.1 528.7,218.3 528.1,217.5 527.8,216.6 527.7,215.6 527.8,214.7 528.2,213.8 528.7,212.9 529.5,212.1 530.4,211.4 531.5,210.8 532.7,210.3 534.0,209.9 535.4,209.7 536.9,209.6 538.3,209.7 539.7,209.9 541.0,210.2 542.2,210.7" fill="#e3edf7" stroke="#7f8fa0" stroke-width="0.5" stroke-linejoin="round" clip-path="url(#c7)"/>
<polygon points="575.1,192.4 576.0,193.1 576.8,193.9 577.3,194.8 577.6,195.7 577.8,196.6 577.6,197.5 577.3,198.5 576.8,199.3 576.0,200.1 575.1,200.9 574.0,201.5 572.8,202.0 571.4,202.3 570.0,202.6 568.6,202.6 567.2,202.6 565.8,202.4 564.4,202.0 563.2,201.5 562.1,200.9 561.2,200.2 560.5,199.4 559.9,198.5 559.6,197.6 559.5,196.7 559.6,195.8 559.9,194.8 560.5,194.0 561.2,193.2 562.2,192.5 563.2,191.8 564.5,191.3 565.8,191.0 567.2,190.7 568.6,190.7 570.1,190.7 571.4,190.9 572.8,191.3 574.0,191.8" fill="url(#gHole)" stroke="#18222e" stroke-width="1.1" stroke-linejoin="round" />
<clipPath id="c8"><polygon points="575.1,192.4 576.0,193.1 576.8,193.9 577.3,194.8 577.6,195.7 577.8,196.6 577.6,197.5 577.3,198.5 576.8,199.3 576.0,200.1 575.1,200.9 574.0,201.5 572.8,202.0 571.4,202.3 570.0,202.6 568.6,202.6 567.2,202.6 565.8,202.4 564.4,202.0 563.2,201.5 562.1,200.9 561.2,200.2 560.5,199.4 559.9,198.5 559.6,197.6 559.5,196.7 559.6,195.8 559.9,194.8 560.5,194.0 561.2,193.2 562.2,192.5 563.2,191.8 564.5,191.3 565.8,191.0 567.2,190.7 568.6,190.7 570.1,190.7 571.4,190.9 572.8,191.3 574.0,191.8"/></clipPath>
<polygon points="575.1,202.5 576.0,203.3 576.8,204.1 577.3,204.9 577.6,205.8 577.8,206.8 577.6,207.7 577.3,208.6 576.8,209.5 576.0,210.3 575.1,211.0 574.0,211.6 572.8,212.1 571.4,212.5 570.0,212.7 568.6,212.8 567.2,212.7 565.8,212.5 564.4,212.2 563.2,211.7 562.1,211.1 561.2,210.4 560.5,209.6 559.9,208.7 559.6,207.8 559.5,206.9 559.6,205.9 559.9,205.0 560.5,204.1 561.2,203.3 562.2,202.6 563.2,202.0 564.5,201.5 565.8,201.1 567.2,200.9 568.6,200.8 570.1,200.9 571.4,201.1 572.8,201.5 574.0,201.9" fill="#e3edf7" stroke="#7f8fa0" stroke-width="0.5" stroke-linejoin="round" clip-path="url(#c8)"/>
<polygon points="591.8,210.8 595.1,213.3 597.8,216.2 599.7,219.3 600.9,222.5 601.3,225.9 600.9,229.2 599.7,232.5 597.7,235.6 595.0,238.5 591.7,241.1 587.8,243.3 583.4,245.1 578.6,246.4 573.6,247.2 568.5,247.5 563.4,247.3 558.4,246.5 553.6,245.2 549.3,243.5 545.3,241.3 542.0,238.8 539.3,235.9 537.4,232.8 536.2,229.6 535.8,226.2 536.2,222.9 537.4,219.6 539.4,216.5 542.1,213.6 545.4,211.0 549.3,208.8 553.7,207.0 558.5,205.7 563.5,204.9 568.6,204.6 573.7,204.8 578.7,205.6 583.5,206.9 587.9,208.6" fill="url(#gBore)" stroke="#18222e" stroke-width="1.2" stroke-linejoin="round" />
<clipPath id="c9"><polygon points="591.8,210.8 595.1,213.3 597.8,216.2 599.7,219.3 600.9,222.5 601.3,225.9 600.9,229.2 599.7,232.5 597.7,235.6 595.0,238.5 591.7,241.1 587.8,243.3 583.4,245.1 578.6,246.4 573.6,247.2 568.5,247.5 563.4,247.3 558.4,246.5 553.6,245.2 549.3,243.5 545.3,241.3 542.0,238.8 539.3,235.9 537.4,232.8 536.2,229.6 535.8,226.2 536.2,222.9 537.4,219.6 539.4,216.5 542.1,213.6 545.4,211.0 549.3,208.8 553.7,207.0 558.5,205.7 563.5,204.9 568.6,204.6 573.7,204.8 578.7,205.6 583.5,206.9 587.9,208.6"/></clipPath>
<g clip-path="url(#c9)"><rect x="591.3" y="200" width="14" height="40" fill="#f3f8fc"/><path d="M591.3 200V240" stroke="#18222e" stroke-width="0.7"/></g>
<polygon points="591.8,230.1 595.1,232.6 597.8,235.5 599.7,238.6 600.9,241.8 601.3,245.2 600.9,248.5 599.7,251.8 597.7,254.9 595.0,257.8 591.7,260.4 587.8,262.6 583.4,264.4 578.6,265.7 573.6,266.5 568.5,266.8 563.4,266.6 558.4,265.8 553.6,264.5 549.3,262.8 545.3,260.6 542.0,258.1 539.3,255.2 537.4,252.1 536.2,248.9 535.8,245.5 536.2,242.2 537.4,238.9 539.4,235.8 542.1,232.9 545.4,230.3 549.3,228.1 553.7,226.3 558.5,225.0 563.5,224.2 568.6,223.9 573.7,224.1 578.7,224.9 583.5,226.2 587.9,227.9" fill="#9facb9" stroke="#18222e" stroke-width="1.0" stroke-linejoin="round" clip-path="url(#c9)"/>
<polygon points="582.8,236.0 584.8,237.5 586.5,239.3 587.7,241.2 588.4,243.2 588.7,245.2 588.4,247.3 587.7,249.3 586.5,251.2 584.8,253.0 582.8,254.6 580.3,255.9 577.7,257.0 574.7,257.8 571.7,258.3 568.5,258.5 565.4,258.4 562.3,257.9 559.4,257.1 556.7,256.1 554.3,254.7 552.3,253.2 550.6,251.4 549.4,249.5 548.7,247.5 548.4,245.5 548.7,243.4 549.4,241.4 550.7,239.5 552.3,237.7 554.4,236.1 556.8,234.8 559.4,233.7 562.4,232.9 565.4,232.4 568.6,232.2 571.7,232.3 574.8,232.8 577.7,233.6 580.4,234.6" fill="url(#gBore)" stroke="#18222e" stroke-width="1.0" stroke-linejoin="round" clip-path="url(#c9)"/>
<polygon points="607.3,165.9 609.1,167.2 610.5,168.7 611.5,170.3 612.1,172.0 612.3,173.7 612.1,175.4 611.5,177.1 610.4,178.7 609.0,180.2 607.3,181.6 605.3,182.7 603.0,183.6 600.6,184.3 598.0,184.7 595.4,184.9 592.7,184.7 590.1,184.3 587.7,183.7 585.4,182.8 583.4,181.7 581.7,180.4 580.3,178.9 579.3,177.3 578.7,175.6 578.5,173.9 578.7,172.1 579.3,170.4 580.3,168.8 581.7,167.3 583.4,166.0 585.5,164.9 587.7,164.0 590.2,163.3 592.8,162.9 595.4,162.7 598.0,162.8 600.6,163.2 603.1,163.9 605.3,164.8" fill="url(#gHole)" stroke="#18222e" stroke-width="1.0" stroke-linejoin="round" />
<clipPath id="c10"><polygon points="607.3,165.9 609.1,167.2 610.5,168.7 611.5,170.3 612.1,172.0 612.3,173.7 612.1,175.4 611.5,177.1 610.4,178.7 609.0,180.2 607.3,181.6 605.3,182.7 603.0,183.6 600.6,184.3 598.0,184.7 595.4,184.9 592.7,184.7 590.1,184.3 587.7,183.7 585.4,182.8 583.4,181.7 581.7,180.4 580.3,178.9 579.3,177.3 578.7,175.6 578.5,173.9 578.7,172.1 579.3,170.4 580.3,168.8 581.7,167.3 583.4,166.0 585.5,164.9 587.7,164.0 590.2,163.3 592.8,162.9 595.4,162.7 598.0,162.8 600.6,163.2 603.1,163.9 605.3,164.8"/></clipPath>
<path d="M606.4 167.4 Q604.4 177 596 184.8" fill="none" stroke="#18222e" stroke-width="0.8" stroke-linejoin="round" stroke-linecap="round" clip-path="url(#c10)"/>
<polygon points="562.6,270.6 564.4,271.9 565.8,273.5 566.9,275.1 567.5,276.9 567.7,278.7 567.5,280.5 566.9,282.3 565.8,284.0 564.4,285.5 562.6,286.9 560.4,288.1 558.1,289.0 555.5,289.7 552.8,290.2 550.1,290.3 547.3,290.2 544.6,289.8 542.1,289.1 539.7,288.2 537.6,287.0 535.8,285.7 534.4,284.1 533.3,282.4 532.7,280.7 532.5,278.9 532.7,277.1 533.3,275.3 534.4,273.6 535.9,272.1 537.7,270.7 539.8,269.5 542.1,268.6 544.7,267.8 547.4,267.4 550.1,267.3 552.9,267.4 555.6,267.8 558.1,268.5 560.5,269.4" fill="#b9c3cd" stroke="#18222e" stroke-width="1.0" stroke-linejoin="round" />
<clipPath id="c11"><polygon points="562.6,270.6 564.4,271.9 565.8,273.5 566.9,275.1 567.5,276.9 567.7,278.7 567.5,280.5 566.9,282.3 565.8,284.0 564.4,285.5 562.6,286.9 560.4,288.1 558.1,289.0 555.5,289.7 552.8,290.2 550.1,290.3 547.3,290.2 544.6,289.8 542.1,289.1 539.7,288.2 537.6,287.0 535.8,285.7 534.4,284.1 533.3,282.4 532.7,280.7 532.5,278.9 532.7,277.1 533.3,275.3 534.4,273.6 535.9,272.1 537.7,270.7 539.8,269.5 542.1,268.6 544.7,267.8 547.4,267.4 550.1,267.3 552.9,267.4 555.6,267.8 558.1,268.5 560.5,269.4"/></clipPath>
<polygon points="562.6,270.6 564.4,271.9 565.8,273.5 566.9,275.1 567.5,276.9 567.7,278.7 567.5,280.5 566.9,282.3 565.8,284.0 564.4,285.5 562.6,286.9 560.4,288.1 558.1,289.0 555.5,289.7 552.8,290.2 550.1,290.3 547.3,290.2 544.6,289.8 542.1,289.1 539.7,288.2 537.6,287.0 535.8,285.7 534.4,284.1 533.3,282.4 532.7,280.7 532.5,278.9 532.7,277.1 533.3,275.3 534.4,273.6 535.9,272.1 537.7,270.7 539.8,269.5 542.1,268.6 544.7,267.8 547.4,267.4 550.1,267.3 552.9,267.4 555.6,267.8 558.1,268.5 560.5,269.4" fill="url(#gHole)" stroke="none" stroke-width="0" stroke-linejoin="round" clip-path="url(#c11)" opacity="0.25"/>
<path d="M548.2,267.3 L561.4,287.2" fill="none" stroke="#18222e" stroke-width="0.7" stroke-linejoin="round" stroke-linecap="round" clip-path="url(#c11)"/>
<ellipse cx="632.5" cy="208.8" rx="3.4" ry="2.8" fill="#e01818" stroke="#7a0c0c" stroke-width="0.7" transform="rotate(0 632.5 208.8)"/><ellipse cx="631.9" cy="208.2" rx="1.4" ry="1.1" fill="#ff6a5a" transform="rotate(0 632.5 208.8)"/>
<ellipse cx="609.5" cy="301.3" rx="2.7" ry="3.6" fill="#e01818" stroke="#7a0c0c" stroke-width="0.7" transform="rotate(25 609.5 301.3)"/><ellipse cx="608.9" cy="300.7" rx="1.1" ry="1.4" fill="#ff6a5a" transform="rotate(25 609.5 301.3)"/>
<ellipse cx="700.0" cy="252.2" rx="2.7" ry="3.6" fill="#e01818" stroke="#7a0c0c" stroke-width="0.7" transform="rotate(25 700.0 252.2)"/><ellipse cx="699.4" cy="251.6" rx="1.1" ry="1.4" fill="#ff6a5a" transform="rotate(25 700.0 252.2)"/>
<linearGradient id="gCbW" gradientUnits="userSpaceOnUse" x1="640" y1="0" x2="686" y2="0"><stop offset="0" stop-color="#c4d0dc"/><stop offset="0.6" stop-color="#e8f0f7"/><stop offset="1" stop-color="#cfdae5"/></linearGradient>
<linearGradient id="gCbF" gradientUnits="userSpaceOnUse" x1="618" y1="0" x2="668" y2="0"><stop offset="0" stop-color="#c9d5e1"/><stop offset="0.35" stop-color="#e4edf5"/><stop offset="0.7" stop-color="#b9c4cf"/><stop offset="1" stop-color="#b2bcc7"/></linearGradient>
<polygon points="682.9,264.2 682.6,270.5 681.5,277.0 679.7,283.7 677.3,290.5 674.3,297.0 670.8,303.2 666.9,309.0 662.6,314.1 658.1,318.5 653.5,322.0 648.9,324.5 644.4,326.1 640.1,326.6 636.2,326.1 632.7,324.5 629.7,321.9 627.3,318.3 625.5,313.9 624.4,308.8 624.0,303.0 624.4,296.8 625.5,290.2 627.3,283.5 629.7,276.8 632.7,270.2 636.2,264.0 640.1,258.3 644.4,253.1 648.9,248.8 653.5,245.3 658.1,242.7 662.6,241.1 666.9,240.6 670.8,241.2 674.3,242.8 677.3,245.4 679.7,248.9 681.5,253.3 682.6,258.5" fill="url(#gCbW)" stroke="#18222e" stroke-width="1.0" stroke-linejoin="round" />
<clipPath id="c12"><polygon points="682.9,264.2 682.6,270.5 681.5,277.0 679.7,283.7 677.3,290.5 674.3,297.0 670.8,303.2 666.9,309.0 662.6,314.1 658.1,318.5 653.5,322.0 648.9,324.5 644.4,326.1 640.1,326.6 636.2,326.1 632.7,324.5 629.7,321.9 627.3,318.3 625.5,313.9 624.4,308.8 624.0,303.0 624.4,296.8 625.5,290.2 627.3,283.5 629.7,276.8 632.7,270.2 636.2,264.0 640.1,258.3 644.4,253.1 648.9,248.8 653.5,245.3 658.1,242.7 662.6,241.1 666.9,240.6 670.8,241.2 674.3,242.8 677.3,245.4 679.7,248.9 681.5,253.3 682.6,258.5"/></clipPath>
<polygon points="671.3,256.6 670.9,262.9 669.8,269.4 668.1,276.2 665.6,282.9 662.6,289.4 659.1,295.7 655.2,301.4 650.9,306.5 646.4,310.9 641.8,314.4 637.2,316.9 632.7,318.5 628.5,319.0 624.5,318.5 621.0,316.9 618.0,314.3 615.6,310.7 613.8,306.3 612.7,301.2 612.4,295.4 612.7,289.2 613.8,282.6 615.6,275.9 618.0,269.2 621.0,262.6 624.5,256.4 628.5,250.7 632.7,245.5 637.2,241.2 641.8,237.7 646.4,235.1 650.9,233.6 655.2,233.0 659.1,233.6 662.6,235.2 665.6,237.8 668.1,241.3 669.8,245.7 670.9,250.9" fill="url(#gCbF)" stroke="#18222e" stroke-width="0.9" stroke-linejoin="round" clip-path="url(#c12)"/>
<clipPath id="c13"><polygon points="671.3,256.6 670.9,262.9 669.8,269.4 668.1,276.2 665.6,282.9 662.6,289.4 659.1,295.7 655.2,301.4 650.9,306.5 646.4,310.9 641.8,314.4 637.2,316.9 632.7,318.5 628.5,319.0 624.5,318.5 621.0,316.9 618.0,314.3 615.6,310.7 613.8,306.3 612.7,301.2 612.4,295.4 612.7,289.2 613.8,282.6 615.6,275.9 618.0,269.2 621.0,262.6 624.5,256.4 628.5,250.7 632.7,245.5 637.2,241.2 641.8,237.7 646.4,235.1 650.9,233.6 655.2,233.0 659.1,233.6 662.6,235.2 665.6,237.8 668.1,241.3 669.8,245.7 670.9,250.9"/></clipPath>
<g clip-path="url(#c12)"><path d="M630.2,268.6 L620.9,262.5M634.4,261.9 L628.4,250.5M627.6,296.0 L616.2,312.2M636.2,299.8 L631.7,319.0" fill="none" stroke="#18222e" stroke-width="0.8" stroke-linejoin="round" stroke-linecap="round" clip-path="url(#c13)"/></g>
<g clip-path="url(#c12)"><polygon points="656.6,266.3 656.5,269.4 655.9,272.7 655.0,276.1 653.8,279.5 652.3,282.8 650.5,285.9 648.5,288.8 646.4,291.4 644.1,293.6 641.8,295.3 639.5,296.6 637.2,297.4 635.1,297.7 633.1,297.4 631.3,296.6 629.8,295.3 628.6,293.5 627.7,291.3 627.2,288.7 627.0,285.8 627.2,282.7 627.7,279.4 628.6,276.0 629.8,272.6 631.3,269.3 633.1,266.2 635.1,263.3 637.2,260.7 639.5,258.5 641.8,256.7 644.1,255.4 646.4,254.7 648.5,254.4 650.5,254.7 652.3,255.5 653.8,256.8 655.0,258.6 655.9,260.8 656.5,263.4" fill="#dbe5ef" stroke="#18222e" stroke-width="0.8" stroke-linejoin="round" /></g>
<g clip-path="url(#c12)"><polygon points="664.0,263.1 652.3,255.5 631.3,296.6 643.0,304.2" fill="#dbe5ef" stroke="none" stroke-width="0" stroke-linejoin="round" /><path d="M664.0,263.1 L652.3,255.5 M643.0,304.2 L631.3,296.6" fill="none" stroke="#18222e" stroke-width="0.7" stroke-linejoin="round" stroke-linecap="round" /></g>
<polygon points="668.3,273.9 668.1,277.0 667.6,280.3 666.7,283.7 665.5,287.1 664.0,290.4 662.2,293.5 660.2,296.4 658.1,299.0 655.8,301.2 653.5,302.9 651.2,304.2 648.9,305.0 646.8,305.3 644.8,305.0 643.0,304.2 641.5,302.9 640.3,301.1 639.4,298.9 638.9,296.3 638.7,293.4 638.9,290.2 639.4,286.9 640.3,283.6 641.5,280.2 643.0,276.9 644.8,273.7 646.8,270.9 648.9,268.3 651.2,266.1 653.5,264.3 655.8,263.0 658.1,262.2 660.2,262.0 662.2,262.3 664.0,263.1 665.5,264.4 666.7,266.2 667.6,268.4 668.1,271.0" fill="#b9c4cf" stroke="#18222e" stroke-width="1.0" stroke-linejoin="round" />
<polygon points="664.6,276.3 664.5,278.7 664.1,281.1 663.4,283.7 662.5,286.2 661.4,288.7 660.0,291.0 658.5,293.2 656.9,295.1 655.2,296.8 653.5,298.1 651.8,299.1 650.1,299.7 648.4,299.8 647.0,299.6 645.6,299.0 644.5,298.1 643.6,296.7 642.9,295.1 642.5,293.1 642.4,290.9 642.5,288.6 642.9,286.1 643.6,283.6 644.5,281.0 645.6,278.6 647.0,276.2 648.4,274.0 650.1,272.1 651.8,270.5 653.5,269.1 655.2,268.2 656.9,267.6 658.5,267.4 660.0,267.6 661.4,268.2 662.5,269.2 663.4,270.5 664.1,272.2 664.5,274.1" fill="#c6d1dc" stroke="#18222e" stroke-width="0.8" stroke-linejoin="round" />
<polygon points="661.1,278.6 661.0,280.2 660.7,281.9 660.3,283.7 659.6,285.4 658.9,287.1 658.0,288.7 656.9,290.2 655.8,291.5 654.7,292.6 653.5,293.5 652.3,294.2 651.1,294.6 650.0,294.7 649.0,294.6 648.1,294.2 647.3,293.5 646.7,292.6 646.3,291.4 646.0,290.1 645.9,288.6 646.0,287.0 646.3,285.3 646.7,283.6 647.3,281.9 648.1,280.2 649.0,278.6 650.0,277.1 651.1,275.7 652.3,274.6 653.5,273.7 654.7,273.1 655.8,272.6 656.9,272.5 658.0,272.7 658.9,273.1 659.6,273.7 660.3,274.7 660.7,275.8 661.0,277.1" fill="url(#gHole)" stroke="#18222e" stroke-width="0.9" stroke-linejoin="round" />
<clipPath id="c14"><polygon points="661.1,278.6 661.0,280.2 660.7,281.9 660.3,283.7 659.6,285.4 658.9,287.1 658.0,288.7 656.9,290.2 655.8,291.5 654.7,292.6 653.5,293.5 652.3,294.2 651.1,294.6 650.0,294.7 649.0,294.6 648.1,294.2 647.3,293.5 646.7,292.6 646.3,291.4 646.0,290.1 645.9,288.6 646.0,287.0 646.3,285.3 646.7,283.6 647.3,281.9 648.1,280.2 649.0,278.6 650.0,277.1 651.1,275.7 652.3,274.6 653.5,273.7 654.7,273.1 655.8,272.6 656.9,272.5 658.0,272.7 658.9,273.1 659.6,273.7 660.3,274.7 660.7,275.8 661.0,277.1"/></clipPath>
<polygon points="652.5,273.0 652.4,274.7 652.2,276.3 651.7,278.1 651.1,279.8 650.3,281.5 649.4,283.1 648.4,284.6 647.3,285.9 646.1,287.1 644.9,288.0 643.7,288.6 642.6,289.0 641.5,289.2 640.5,289.0 639.6,288.6 638.8,287.9 638.2,287.0 637.7,285.9 637.4,284.6 637.3,283.1 637.4,281.5 637.7,279.8 638.2,278.0 638.8,276.3 639.6,274.6 640.5,273.0 641.5,271.5 642.6,270.2 643.7,269.1 644.9,268.1 646.1,267.5 647.3,267.1 648.4,267.0 649.4,267.1 650.3,267.5 651.1,268.2 651.7,269.1 652.2,270.2 652.4,271.6" fill="#c3cfdb" stroke="#18222e" stroke-width="0.7" stroke-linejoin="round" clip-path="url(#c14)"/>
<polygon points="622.7,323.2 622.6,324.9 622.3,326.6 621.8,328.4 621.2,330.2 620.4,331.9 619.5,333.6 618.4,335.1 617.3,336.4 616.1,337.6 614.9,338.5 613.7,339.2 612.5,339.6 611.3,339.8 610.3,339.6 609.4,339.2 608.6,338.5 607.9,337.6 607.5,336.4 607.2,335.0 607.1,333.5 607.2,331.9 607.5,330.1 607.9,328.3 608.6,326.6 609.4,324.8 610.3,323.2 611.3,321.6 612.5,320.3 613.7,319.1 614.9,318.2 616.1,317.5 617.3,317.1 618.4,317.0 619.5,317.1 620.4,317.5 621.2,318.2 621.8,319.2 622.3,320.3 622.6,321.7" fill="#c9d4df" stroke="#18222e" stroke-width="1.0" stroke-linejoin="round" />
<clipPath id="c15"><polygon points="622.7,323.2 622.6,324.9 622.3,326.6 621.8,328.4 621.2,330.2 620.4,331.9 619.5,333.6 618.4,335.1 617.3,336.4 616.1,337.6 614.9,338.5 613.7,339.2 612.5,339.6 611.3,339.8 610.3,339.6 609.4,339.2 608.6,338.5 607.9,337.6 607.5,336.4 607.2,335.0 607.1,333.5 607.2,331.9 607.5,330.1 607.9,328.3 608.6,326.6 609.4,324.8 610.3,323.2 611.3,321.6 612.5,320.3 613.7,319.1 614.9,318.2 616.1,317.5 617.3,317.1 618.4,317.0 619.5,317.1 620.4,317.5 621.2,318.2 621.8,319.2 622.3,320.3 622.6,321.7"/></clipPath>
<polygon points="619.2,320.9 619.1,322.6 618.8,324.3 618.3,326.1 617.7,327.9 616.9,329.6 616.0,331.3 614.9,332.8 613.8,334.2 612.6,335.3 611.4,336.2 610.2,336.9 609.0,337.3 607.8,337.5 606.8,337.3 605.9,336.9 605.1,336.2 604.4,335.3 604.0,334.1 603.7,332.8 603.6,331.2 603.7,329.6 604.0,327.8 604.4,326.1 605.1,324.3 605.9,322.5 606.8,320.9 607.8,319.4 609.0,318.0 610.2,316.9 611.4,315.9 612.6,315.3 613.8,314.8 614.9,314.7 616.0,314.8 616.9,315.3 617.7,316.0 618.3,316.9 618.8,318.1 619.1,319.4" fill="#dfe8f0" stroke="#18222e" stroke-width="0.7" stroke-linejoin="round" clip-path="url(#c15)"/>
<g transform="matrix(0.84,-0.545,0,1,697.2,289)"><text x="0" y="0" font-size="9" font-weight="bold" fill="#0c1218" stroke="#0c1218" stroke-width="0.55" textLength="40.5" lengthAdjust="spacingAndGlyphs">HEXAGON</text></g>
<g transform="matrix(0.84,-0.545,0,1,680.3,300.2)" stroke="#0c1218" stroke-width="1" fill="none" stroke-linejoin="round"><path d="M0 -11l4 6 2.6-9 3.4 8 5.5-8.5-1.5 13-6.5 7.5-6-7z" fill="#3a434d"/><path d="M4 -5l3 10.5 3-11.5M0.5 -2l6.5 7.5 7-9M2 -8l11 6" stroke="#aeb9c5" stroke-width="0.6"/></g>
<linearGradient id="gSl" gradientUnits="userSpaceOnUse" x1="626" y1="160" x2="652" y2="172"><stop offset="0" stop-color="#dfe8f0"/><stop offset="0.5" stop-color="#f6fafd"/><stop offset="1" stop-color="#c8d3de"/></linearGradient>
<ellipse cx="638.2" cy="166.6" rx="13.6" ry="4.3" transform="rotate(24 638.2 166.6)" fill="url(#gSl)" stroke="#1c242b" stroke-width="0.9"/>
<path d="M636.3 179.2 L654.4 171.9" fill="none" stroke="#18222e" stroke-width="0.9" stroke-linejoin="round" stroke-linecap="round" />
<path d="M650.2 177.6 C648.6 183,651 188.6,656.6 192 C668 198.6,690 201.4,704.5 203.4" fill="none" stroke="#18222e" stroke-width="1.0" stroke-linejoin="round" stroke-linecap="round" />
<path d="M659 180.6 C654.6 183,654 188,658.6 190.6 C668 196,688 199.6,703 202" fill="none" stroke="#18222e" stroke-width="0.8" stroke-linejoin="round" stroke-linecap="round" />
<path d="M659 180.6 C662 176.6,670 177,675.6 181 C679 183.6,682.6 187.4,686.6 186.6 C690 186,690.6 182.4,688 181 C685.4 179.6,682 181.4,683 184.4" fill="#c3ced9" stroke="#18222e" stroke-width="1.0" stroke-linejoin="round" stroke-linecap="round" />
<path d="M668.6 178.4 C672 174.6,680 176,686 179.6 M690.4 183.6 L695 187 C698.6 190,701.6 195.6,703.6 201.6" fill="none" stroke="#18222e" stroke-width="0.9" stroke-linejoin="round" stroke-linecap="round" />
<path d="M703.4 204.8l0.3 6 1.5-1.4 1.6 4 1-0.5-1.5-3.9 2-0.2z" fill="#111"/>
<path d="M552.8 297.5 L553 279.5" fill="none" stroke="#45b6e6" stroke-width="1.4" stroke-linejoin="round" stroke-linecap="round" />
<path d="M553 276.6l2 5h-4z" fill="#45b6e6"/>
<path d="M552.8 297.5 L541.6 290.4" fill="none" stroke="#2f9a3e" stroke-width="1.5" stroke-linejoin="round" stroke-linecap="round" />
<path d="M538.4 288.4l5.2 0.4-2.4 3.6z" fill="#2f9a3e"/>
<path d="M552.8 297.5 L562.4 291.4" fill="none" stroke="#c62a2a" stroke-width="1.5" stroke-linejoin="round" stroke-linecap="round" />
<path d="M565.6 289.4l-5.2 0.6 2.4 3.6z" fill="#c62a2a"/>
<g stroke-linejoin="round"><polygon points="461.3,445 471.8,451.8 461.6,456.8 451.5,451.8" fill="#7fb4ba" stroke="#10161c" stroke-width="1"/><polygon points="451.5,451.8 461.6,456.8 461.3,471.3 451.5,463.8" fill="#a25a52" stroke="#10161c" stroke-width="0.7"/><polygon points="471.8,451.8 461.6,456.8 461.3,471.3 471.8,463.8" fill="#3d7d4a" stroke="#10161c" stroke-width="0.7"/><path d="M451.5 463.8L461.6 456.8 M451.5 451.8L461.3 471.3" stroke="#8a4a7a" stroke-width="0.6"/><path d="M471.8 463.8L461.6 456.8 M471.8 451.8L461.3 471.3" stroke="#2f6a3a" stroke-width="0.6"/><path d="M461.5 456.8V471.3" stroke="#e8f4f4" stroke-width="1"/><path d="M451.5 463.8L461.3 471.3" stroke="#4aa04a" stroke-width="0.8"/><path d="M461.3 471.3L471.8 463.8" stroke="#c83a3a" stroke-width="0.8"/></g>
</svg>
<svg width="800" height="560" viewBox="0 0 800 560">
<rect x="27.3" y="120.2" width="393.2" height="331" fill="none" stroke="#7a7a7a" stroke-width="0.7"/>
<path d="M125 114.5L125 120.2" stroke="#7a7a7a" stroke-width="0.6"/>
<path d="M223.5 114.5L223.5 120.2" stroke="#7a7a7a" stroke-width="0.6"/>
<path d="M125 451.2L125 456.5" stroke="#7a7a7a" stroke-width="0.6"/>
<path d="M223.5 451.2L223.5 456.5" stroke="#7a7a7a" stroke-width="0.6"/>
<path d="M321.8 451.2L321.8 456.5" stroke="#7a7a7a" stroke-width="0.6"/>
<path d="M21.5 285.8L27.3 285.8" stroke="#7a7a7a" stroke-width="0.6"/>
<path d="M420.5 285.8L426 285.8" stroke="#7a7a7a" stroke-width="0.6"/>
<path d="M21.5 368.3L27.3 368.3" stroke="#7a7a7a" stroke-width="0.6"/>
<path d="M420.5 368.3L426 368.3" stroke="#7a7a7a" stroke-width="0.6"/>
<text x="74" y="116.6" font-size="5.6" text-anchor="middle" fill="#333" stroke="#333" stroke-width="0.16" >4</text>
<text x="174.8" y="116.6" font-size="5.6" text-anchor="middle" fill="#333" stroke="#333" stroke-width="0.16" >3</text>
<text x="273.5" y="116.6" font-size="5.6" text-anchor="middle" fill="#333" stroke="#333" stroke-width="0.16" >2</text>
<text x="370" y="116.6" font-size="5.6" text-anchor="middle" fill="#333" stroke="#333" stroke-width="0.16" >1</text>
<text x="75.4" y="459.6" font-size="5.6" text-anchor="middle" fill="#333" stroke="#333" stroke-width="0.16" >4</text>
<text x="174.8" y="459.6" font-size="5.6" text-anchor="middle" fill="#333" stroke="#333" stroke-width="0.16" >3</text>
<text x="269.6" y="459.6" font-size="5.6" text-anchor="middle" fill="#333" stroke="#333" stroke-width="0.16" >2</text>
<text x="371.2" y="459.6" font-size="5.6" text-anchor="middle" fill="#333" stroke="#333" stroke-width="0.16" >1</text>
<text x="23.2" y="161.4" font-size="5.6" text-anchor="middle" fill="#444" stroke="#444" stroke-width="0.16" >D</text>
<text x="426.2" y="161.4" font-size="5.6" text-anchor="middle" fill="#444" stroke="#444" stroke-width="0.16" >D</text>
<text x="23.2" y="243.6" font-size="5.6" text-anchor="middle" fill="#444" stroke="#444" stroke-width="0.16" >C</text>
<text x="426.2" y="243.8" font-size="5.6" text-anchor="middle" fill="#444" stroke="#444" stroke-width="0.16" >C</text>
<text x="23.2" y="327" font-size="5.6" text-anchor="middle" fill="#444" stroke="#444" stroke-width="0.16" >B</text>
<text x="426.2" y="329.2" font-size="5.6" text-anchor="middle" fill="#444" stroke="#444" stroke-width="0.16" >B</text>
<text x="23.2" y="412.6" font-size="5.6" text-anchor="middle" fill="#444" stroke="#444" stroke-width="0.16" >A</text>
<text x="426.2" y="412.8" font-size="5.6" text-anchor="middle" fill="#444" stroke="#444" stroke-width="0.16" >A</text>
<path d="M163.75 157H280.5V223.25H187.5L185 220L182.5 223.25H163.75V203.75A14 14 0 0 0 163.75 176.25Z" stroke="#111" stroke-width="1.3" fill="none" stroke-linejoin="round" stroke-linecap="round"/>
<path d="M163.75 157C165.6 163,169.6 167,175 167C180.4 167,182 159.6,185.4 159.5C188.6 159.4,190 163.3,195 163.3C199.4 163.3,200.6 159.4,202 157" stroke="#111" stroke-width="1.3" fill="none" stroke-linejoin="round" stroke-linecap="round"/>
<path d="M200 157C222 156.6,240 152,257.5 151.9C268 152,276 154.6,280.5 157" stroke="#111" stroke-width="1.3" fill="none" stroke-linejoin="round" stroke-linecap="round" stroke-width="0.9"/>
<path d="M246.25 157V223.25M246.25 187.7H280.5" stroke="#111" stroke-width="1.3" fill="none" stroke-linejoin="round" stroke-linecap="round"/>
<g stroke="#111" stroke-width="1.3" fill="none" stroke-linejoin="round" stroke-linecap="round"><circle cx="173.1" cy="212" r="7.6"/><circle cx="202.5" cy="191.25" r="13.75"/><circle cx="202.5" cy="191.25" r="8.75"/><circle cx="202.5" cy="191.25" r="4.5"/>
<circle cx="222.90" cy="191.25" r="4.1"/>
<circle cx="216.50" cy="208.25" r="4.1"/>
<circle cx="202.50" cy="214.85" r="4.1"/>
<circle cx="188.10" cy="208.25" r="4.1"/>
<circle cx="182.10" cy="191.25" r="4.1"/>
<circle cx="188.10" cy="173.75" r="4.1"/>
<circle cx="202.50" cy="167.65" r="4.1"/>
<circle cx="216.50" cy="173.75" r="4.1"/>
<circle cx="236.5" cy="170.2" r="7.2"/><ellipse cx="264" cy="175" rx="7.9" ry="9.5"/>
<path d="M249.6 199 C252 192.6,261 191.6,265.4 196.4 C268.6 191.6,277.6 192,279.4 199.4 C281 206.4,276 211.6,269.4 211.2 C267.6 217.6,257.6 220.6,251.6 214.6 C246.8 209.8,247.4 203.6,249.6 199Z"/>
</g>
<path d="M147.5 191.25L286 191.25" stroke="#6a6a6a" stroke-width="0.45" fill="none" stroke-dasharray="5 1.2 1.2 1.2"/>
<path d="M202.5 135L202.5 226" stroke="#6a6a6a" stroke-width="0.45" fill="none" stroke-dasharray="5 1.2 1.2 1.2"/>
<path d="M236.75 135L236.75 178" stroke="#6a6a6a" stroke-width="0.45" fill="none" stroke-dasharray="5 1.2 1.2 1.2"/>
<path d="M153.75 212L186 212" stroke="#6a6a6a" stroke-width="0.45" fill="none" stroke-dasharray="5 1.2 1.2 1.2"/>
<path d="M173.1 205L173.1 233" stroke="#6a6a6a" stroke-width="0.45" fill="none" stroke-dasharray="2 1.2"/>
<path d="M163.75 134.5L163.75 155" stroke="#6a6a6a" stroke-width="0.45" fill="none" stroke-dasharray="2 1.2"/>
<path d="M165 138L176 138" stroke="#4a4a4a" stroke-width="0.5" fill="none"/>
<path d="M195 138L201.5 138" stroke="#4a4a4a" stroke-width="0.5" fill="none"/>
<polygon points="164.30,138.00 167.50,137.10 167.50,138.90" fill="#222"/>
<polygon points="202.00,138.00 198.80,138.90 198.80,137.10" fill="#222"/>
<text x="185.5" y="140" font-size="5.7" text-anchor="middle" fill="#242424" stroke="#242424" stroke-width="0.16" >1.575</text>
<path d="M203.5 138L211 138" stroke="#4a4a4a" stroke-width="0.5" fill="none"/>
<path d="M230 138L236 138" stroke="#4a4a4a" stroke-width="0.5" fill="none"/>
<polygon points="203.00,138.00 206.20,137.10 206.20,138.90" fill="#222"/>
<polygon points="236.30,138.00 233.10,138.90 233.10,137.10" fill="#222"/>
<text x="220.5" y="140" font-size="5.7" text-anchor="middle" fill="#242424" stroke="#242424" stroke-width="0.16" >1.378</text>
<text x="260.2" y="144" font-size="5.7" text-anchor="start" fill="#242424" stroke="#242424" stroke-width="0.16" >Ø .591</text>
<path d="M258.6 142 H253.6 C249 146,245.6 154,241.8 161.6" stroke="#4a4a4a" stroke-width="0.5" fill="none"/>
<polygon points="240.80,163.60 241.30,160.54 242.76,161.19" fill="#222"/>
<path d="M282 157.2L300.6 157.2" stroke="#4a4a4a" stroke-width="0.5" fill="none"/>
<path d="M282 190.4L290 190.4" stroke="#6a6a6a" stroke-width="0.45" fill="none" stroke-dasharray="2 1.2"/>
<path d="M287.6 173.6L287.6 176.4" stroke="#4a4a4a" stroke-width="0.5" fill="none"/>
<path d="M287.6 183.2L287.6 186.4" stroke="#4a4a4a" stroke-width="0.5" fill="none"/>
<polygon points="287.60,171.40 288.40,174.20 286.80,174.20" fill="#222"/>
<polygon points="287.60,188.60 286.80,185.80 288.40,185.80" fill="#222"/>
<text x="288" y="182" font-size="5.4" text-anchor="middle" fill="#242424" stroke="#242424" stroke-width="0.16" >.709</text>
<path d="M297.2 159.4L297.2 193.6" stroke="#4a4a4a" stroke-width="0.5" fill="none"/>
<path d="M297.2 202L297.2 221.4" stroke="#4a4a4a" stroke-width="0.5" fill="none"/>
<polygon points="297.20,157.70 298.10,160.90 296.30,160.90" fill="#222"/>
<polygon points="297.20,223.00 296.30,219.80 298.10,219.80" fill="#222"/>
<path d="M282 223.25L299.5 223.25" stroke="#4a4a4a" stroke-width="0.5" fill="none"/>
<text x="291" y="200" font-size="5.7" text-anchor="start" fill="#242424" stroke="#242424" stroke-width="0.16" >2.362</text>
<path d="M147 223.25L162 223.25" stroke="#4a4a4a" stroke-width="0.5" fill="none"/>
<path d="M149.5 193L149.5 195.6" stroke="#4a4a4a" stroke-width="0.5" fill="none"/>
<path d="M149.5 203L149.5 221.5" stroke="#4a4a4a" stroke-width="0.5" fill="none"/>
<polygon points="149.50,191.70 150.40,194.90 148.60,194.90" fill="#222"/>
<polygon points="149.50,222.90 148.60,219.70 150.40,219.70" fill="#222"/>
<text x="150.4" y="202.2" font-size="5.7" text-anchor="middle" fill="#242424" stroke="#242424" stroke-width="0.16" >1.181</text>
<path d="M158 214L158 221.6" stroke="#4a4a4a" stroke-width="0.5" fill="none"/>
<polygon points="158.00,212.90 158.70,215.50 157.30,215.50" fill="#222"/>
<polygon points="158.00,222.90 157.30,220.30 158.70,220.30" fill="#222"/>
<text x="150.3" y="233.8" font-size="5.7" text-anchor="middle" fill="#242424" stroke="#242424" stroke-width="0.16" >.394</text>
<text x="185.4" y="233.8" font-size="5.7" text-anchor="middle" fill="#242424" stroke="#242424" stroke-width="0.16" >.394</text>
<path d="M155.8 231.7L160.5 231.7" stroke="#4a4a4a" stroke-width="0.5" fill="none"/>
<path d="M165 231.7L172 231.7" stroke="#4a4a4a" stroke-width="0.5" fill="none"/>
<path d="M174.6 231.7L179.5 231.7" stroke="#4a4a4a" stroke-width="0.5" fill="none"/>
<polygon points="163.90,231.70 161.30,232.40 161.30,231.00" fill="#222"/>
<polygon points="173.20,231.70 175.80,231.00 175.80,232.40" fill="#222"/>
<path d="M163.75 225L163.75 234" stroke="#6a6a6a" stroke-width="0.45" fill="none" stroke-dasharray="2 1.2"/>
<path d="M156.2 231.4 L158 226.4" stroke="#4a4a4a" stroke-width="0.5" fill="none"/>
<text x="105.2" y="183.6" font-size="5.7" text-anchor="start" fill="#242424" stroke="#242424" stroke-width="0.16" textLength="31.2" lengthAdjust="spacingAndGlyphs" >R .492 ±.010</text>
<path d="M138 181.6 H158 L169.4 199.4" stroke="#6a6a6a" stroke-width="0.45" fill="none" stroke-dasharray="2 1.2"/>
<polygon points="170.00,200.60 167.94,198.27 169.37,197.56" fill="#222"/>
<rect x="140.7" y="162.6" width="6.8" height="8.6" fill="#fff" stroke="#555" stroke-width="0.6"/>
<text x="144.1" y="169.0" font-size="6" text-anchor="middle" fill="#222" stroke="#222" stroke-width="0.16" >G</text>
<path d="M144.1 171.2L144.1 179" stroke="#333" stroke-width="0.6"/>
<polygon points="144.1,178.6 146,181.8 142.2,181.8" fill="#111"/>
<rect x="255.60000000000002" y="233.89999999999998" width="6.4" height="8.6" fill="#fff" stroke="#555" stroke-width="0.6"/>
<text x="258.8" y="240.29999999999998" font-size="6" text-anchor="middle" fill="#222" stroke="#222" stroke-width="0.16" >B</text>
<path d="M258.8 226.5L258.8 233.9" stroke="#333" stroke-width="0.6"/>
<polygon points="258.8,223.6 260.6,226.8 257,226.8" fill="#111"/>
<g stroke="#111" stroke-width="1.3" fill="none" stroke-linejoin="round" stroke-linecap="round"><rect x="67.5" y="269.5" width="58.75" height="55.5"/><path d="M84.75 269.5V289.4M84.75 305.6V325M108.75 269.5V289.4M108.75 305.6V325"/>
<path d="M67.5 289.4H84.75L86 293.1M67.5 293.1H89.4V301.9H67.5M86 301.9L84.75 305.6H67.5"/>
<path d="M126.25 289.4H108.75L107.4 293.1M126.25 293.1H103.75V301.9H126.25M107.4 301.9L108.75 305.6H126.25"/>
<path d="M67.5 285C61.4 297,61.4 313,67.5 325" stroke-width="0.9"/></g>
<path d="M53.5 297.5L138 297.5" stroke="#6a6a6a" stroke-width="0.45" fill="none" stroke-dasharray="5 1.2 1.2 1.2"/>
<path d="M89.4 289.4L103.75 289.4" stroke="#6a6a6a" stroke-width="0.45" fill="none" stroke-dasharray="2 1.2"/>
<path d="M89.4 305.6L103.75 305.6" stroke="#6a6a6a" stroke-width="0.45" fill="none" stroke-dasharray="2 1.2"/>
<path d="M91 293.5L102 293.5" stroke="#6a6a6a" stroke-width="0.45" fill="none" stroke-dasharray="2 1.2"/>
<path d="M91 301.6L102 301.6" stroke="#6a6a6a" stroke-width="0.45" fill="none" stroke-dasharray="2 1.2"/>
<path d="M89.4 258.5L89.4 289" stroke="#6a6a6a" stroke-width="0.45" fill="none" stroke-dasharray="2 1.2"/>
<path d="M103.75 258.5L103.75 289" stroke="#6a6a6a" stroke-width="0.45" fill="none" stroke-dasharray="2 1.2"/>
<path d="M54.4 293.1L67 293.1" stroke="#4a4a4a" stroke-width="0.5" fill="none"/>
<path d="M54.4 301.9L67 301.9" stroke="#4a4a4a" stroke-width="0.5" fill="none"/>
<path d="M128.5 289.4L138 289.4" stroke="#4a4a4a" stroke-width="0.5" fill="none"/>
<path d="M128.5 305.6L138 305.6" stroke="#4a4a4a" stroke-width="0.5" fill="none"/>
<text x="112" y="257" font-size="5.7" text-anchor="middle" fill="#242424" stroke="#242424" stroke-width="0.16" >.591</text>
<path d="M110.6 258.4V263.7H104.5" stroke="#4a4a4a" stroke-width="0.5" fill="none"/>
<path d="M91 263.7L102 263.7" stroke="#4a4a4a" stroke-width="0.5" fill="none"/>
<polygon points="89.70,263.70 92.50,262.90 92.50,264.50" fill="#222"/>
<polygon points="103.50,263.70 100.70,264.50 100.70,262.90" fill="#222"/>
<polygon points="68.6,232.9 71.39999999999999,229.5 77.8,229.5 80.6,232.9 77.8,236.3 71.39999999999999,236.3" fill="#fff" stroke="#444" stroke-width="0.6"/>
<text x="74.6" y="234.8" font-size="5" text-anchor="middle" fill="#222" stroke="#222" stroke-width="0.16" >CF</text>
<text x="82.3" y="235" font-size="5.7" text-anchor="start" fill="#242424" stroke="#242424" stroke-width="0.16" >.315</text>
<path d="M68.4 232.9H57V290" stroke="#4a4a4a" stroke-width="0.5" fill="none"/>
<path d="M57 295.5L57 299.5" stroke="#4a4a4a" stroke-width="0.5" fill="none"/>
<polygon points="57.00,292.90 56.20,290.10 57.80,290.10" fill="#222"/>
<polygon points="57.00,302.10 57.80,304.90 56.20,304.90" fill="#222"/>
<rect x="68.5" y="238" width="32.6" height="8.3" fill="#f3a32f"/>
<path d="M77 239.2V245.10000000000002" stroke="#d28a1c" stroke-width="0.5"/>
<path d="M93 239.2V245.10000000000002" stroke="#d28a1c" stroke-width="0.5"/>
<text x="72.7" y="244.05" font-size="5.3" text-anchor="middle" fill="#cf8416" stroke="#cf8416" stroke-width="0.16" >⊥</text>
<text x="85" y="244.05" font-size="5.3" text-anchor="middle" fill="#cf8416" stroke="#cf8416" stroke-width="0.16" >.01</text>
<text x="97" y="244.05" font-size="5.3" text-anchor="middle" fill="#cf8416" stroke="#cf8416" stroke-width="0.16" >G</text>
<rect x="93.69999999999999" y="220.5" width="5.8" height="6.4" fill="#fff" stroke="#555" stroke-width="0.6"/>
<text x="96.6" y="225.79999999999998" font-size="6" text-anchor="middle" fill="#222" stroke="#222" stroke-width="0.16" >H</text>
<path d="M96.6 226.9L96.6 236.6" stroke="#333" stroke-width="0.6"/>
<circle cx="96.6" cy="237" r="1.2" fill="#111"/>
<polygon points="100.2,334.5 103.0,331.1 109.4,331.1 112.2,334.5 109.4,337.9 103.0,337.9" fill="#fff" stroke="#444" stroke-width="0.6"/>
<text x="106.2" y="336.4" font-size="5" text-anchor="middle" fill="#222" stroke="#222" stroke-width="0.16" >CF</text>
<text x="114" y="336.6" font-size="5.7" text-anchor="start" fill="#242424" stroke="#242424" stroke-width="0.16" >.591</text>
<path d="M124.5 334.5H133.2V308" stroke="#4a4a4a" stroke-width="0.5" fill="none"/>
<path d="M133.2 292L133.2 303" stroke="#4a4a4a" stroke-width="0.5" fill="none"/>
<polygon points="133.20,289.60 134.00,292.40 132.40,292.40" fill="#222"/>
<polygon points="133.20,305.40 132.40,302.60 134.00,302.60" fill="#222"/>
<rect x="95" y="340" width="31.4" height="8.2" fill="#f3a32f"/>
<path d="M103.4 341.2V347.0" stroke="#d28a1c" stroke-width="0.5"/>
<path d="M118.6 341.2V347.0" stroke="#d28a1c" stroke-width="0.5"/>
<text x="99.2" y="346.0" font-size="5.3" text-anchor="middle" fill="#cf8416" stroke="#cf8416" stroke-width="0.16" >⌯</text>
<text x="111" y="346.0" font-size="5.3" text-anchor="middle" fill="#cf8416" stroke="#cf8416" stroke-width="0.16" >.012</text>
<text x="122.4" y="346.0" font-size="5.3" text-anchor="middle" fill="#cf8416" stroke="#cf8416" stroke-width="0.16" >H</text>
<path d="M163.75 270H256.2 C261 270.4,264.6 273.6,267.6 277.6 C270.6 281.6,273.6 283.4,276.2 284.6 C279.4 286,280.75 288.4,280.75 291.4 V325H163.75V304.5H167.5V300H173V292.5H167.5V288.75H163.75Z" stroke="#111" stroke-width="1.3" fill="none" stroke-linejoin="round" stroke-linecap="round"/>
<g stroke="#111" stroke-width="1.3" fill="none" stroke-linejoin="round" stroke-linecap="round"><path d="M178.1 270V325M183.1 270V325M188.1 270V325" stroke-width="1.1"/><circle cx="202.3" cy="307.8" r="5.2"/><circle cx="226.6" cy="296.6" r="18.75"/><circle cx="226.6" cy="296.6" r="9.3" stroke-width="1"/><circle cx="226.6" cy="296.6" r="6.9" stroke-width="0.9"/><circle cx="226.6" cy="296.6" r="4.9" stroke-width="0.9"/><circle cx="226.6" cy="296.6" r="2.5" stroke-width="0.8"/></g>
<path d="M163.75 252L163.75 366" stroke="#6a6a6a" stroke-width="0.45" fill="none" stroke-dasharray="5 1.2 1.2 1.2"/>
<rect x="147.6" y="255.6" width="7.2" height="8.8" fill="#fff" stroke="#555" stroke-width="0.6"/>
<text x="151.2" y="262.1" font-size="6" text-anchor="middle" fill="#222" stroke="#222" stroke-width="0.16" >C</text>
<path d="M154.8 260L160.4 260" stroke="#333" stroke-width="0.6"/>
<polygon points="163.4,260 160.2,258.2 160.2,261.8" fill="#111"/>
<polygon points="157,246.2 159.8,242.79999999999998 166.2,242.79999999999998 169,246.2 166.2,249.6 159.8,249.6" fill="#fff" stroke="#444" stroke-width="0.6"/>
<text x="163" y="248.1" font-size="5" text-anchor="middle" fill="#222" stroke="#222" stroke-width="0.16" >CF</text>
<text x="156" y="285.3" font-size="5.4" text-anchor="middle" fill="#242424" stroke="#242424" stroke-width="0.16" >.984</text>
<path d="M156.2 272L156.2 279.6" stroke="#4a4a4a" stroke-width="0.5" fill="none"/>
<path d="M156.2 287L156.2 294.6" stroke="#4a4a4a" stroke-width="0.5" fill="none"/>
<polygon points="156.20,270.40 157.00,273.20 155.40,273.20" fill="#222"/>
<polygon points="156.20,296.00 155.40,293.20 157.00,293.20" fill="#222"/>
<path d="M152.5 270L162 270" stroke="#4a4a4a" stroke-width="0.5" fill="none"/>
<path d="M152.5 296.25L162 296.25" stroke="#4a4a4a" stroke-width="0.5" fill="none"/>
<text x="148.8" y="335" font-size="5.7" text-anchor="middle" fill="#242424" stroke="#242424" stroke-width="0.16" >.197</text>
<text x="148.8" y="343.8" font-size="5.7" text-anchor="middle" fill="#242424" stroke="#242424" stroke-width="0.16" >.394</text>
<path d="M167.75 306L167.75 337" stroke="#4a4a4a" stroke-width="0.5" fill="none"/>
<path d="M170.6 326L170.6 336" stroke="#4a4a4a" stroke-width="0.5" fill="none"/>
<path d="M173.1 306L173.1 344.5" stroke="#4a4a4a" stroke-width="0.5" fill="none"/>
<path d="M163.75 326L163.75 364" stroke="#333" stroke-width="0.8"/>
<path d="M155 333L161 333" stroke="#4a4a4a" stroke-width="0.5" fill="none"/>
<polygon points="163.40,333.00 160.80,333.70 160.80,332.30" fill="#222"/>
<path d="M170.6 333L176 333" stroke="#4a4a4a" stroke-width="0.5" fill="none"/>
<polygon points="170.30,333.00 172.90,332.30 172.90,333.70" fill="#222"/>
<path d="M155 341.8L161 341.8" stroke="#4a4a4a" stroke-width="0.5" fill="none"/>
<polygon points="163.40,341.80 160.80,342.50 160.80,341.10" fill="#222"/>
<path d="M176 341.8L180 341.8" stroke="#4a4a4a" stroke-width="0.5" fill="none"/>
<polygon points="173.40,341.80 176.00,341.10 176.00,342.50" fill="#222"/>
<text x="183.8" y="353.3" font-size="5.7" text-anchor="middle" fill="#242424" stroke="#242424" stroke-width="0.16" >1.575</text>
<path d="M165.5 351.25L175 351.25" stroke="#4a4a4a" stroke-width="0.5" fill="none"/>
<path d="M192.6 351.25L200 351.25" stroke="#4a4a4a" stroke-width="0.5" fill="none"/>
<polygon points="164.20,351.25 167.40,350.35 167.40,352.15" fill="#222"/>
<polygon points="201.60,351.25 198.40,352.15 198.40,350.35" fill="#222"/>
<path d="M202.5 314L202.5 353.5" stroke="#6a6a6a" stroke-width="0.45" fill="none" stroke-dasharray="2 1.2"/>
<text x="226.3" y="362.8" font-size="5.7" text-anchor="middle" fill="#242424" stroke="#242424" stroke-width="0.16" >4.724</text>
<path d="M165.5 360.75L217 360.75" stroke="#4a4a4a" stroke-width="0.5" fill="none"/>
<path d="M236 360.75L279.5 360.75" stroke="#4a4a4a" stroke-width="0.5" fill="none"/>
<polygon points="164.20,360.75 167.40,359.85 167.40,361.65" fill="#222"/>
<polygon points="281.00,360.75 277.80,361.65 277.80,359.85" fill="#222"/>
<path d="M281.2 326L281.2 363" stroke="#4a4a4a" stroke-width="0.5" fill="none"/>
<text x="283.8" y="297.2" font-size="5.7" text-anchor="start" fill="#242424" stroke="#242424" stroke-width="0.16" >1.969</text>
<path d="M288.75 272L288.75 290.6" stroke="#4a4a4a" stroke-width="0.5" fill="none"/>
<path d="M288.75 299.6L288.75 323" stroke="#4a4a4a" stroke-width="0.5" fill="none"/>
<polygon points="288.75,270.40 289.65,273.60 287.85,273.60" fill="#222"/>
<polygon points="288.75,324.60 287.85,321.40 289.65,321.40" fill="#222"/>
<path d="M282 325L291 325" stroke="#4a4a4a" stroke-width="0.5" fill="none"/>
<path d="M257 270L296.2 270" stroke="#4a4a4a" stroke-width="0.5" fill="none"/>
<text x="226.4" y="335" font-size="5.7" text-anchor="middle" fill="#242424" stroke="#242424" stroke-width="0.16" >1.060</text>
<path d="M203.4 311 L214.4 341.6M227.2 299 L238.2 330" stroke="#4a4a4a" stroke-width="0.5" fill="none"/>
<path d="M215.6 339.6L219.6 337.8" stroke="#4a4a4a" stroke-width="0.5" fill="none"/>
<path d="M233.2 331.4L236.4 330" stroke="#4a4a4a" stroke-width="0.5" fill="none"/>
<polygon points="213.90,340.40 216.13,338.52 216.78,339.98" fill="#222"/>
<polygon points="237.80,329.40 235.57,331.28 234.92,329.82" fill="#222"/>
<text x="220.2" y="251.3" font-size="5.7" text-anchor="start" fill="#242424" stroke="#242424" stroke-width="0.16" >Ø .394</text>
<path d="M218.6 249.3H214.2L203.9 302.2" stroke="#4a4a4a" stroke-width="0.5" fill="none"/>
<polygon points="203.60,303.60 203.34,300.70 204.91,301.00" fill="#222"/>
<rect x="220" y="254.4" width="41.3" height="7" fill="#f3a32f"/>
<path d="M228.6 255.6V260.2" stroke="#d28a1c" stroke-width="0.5"/>
<path d="M249.4 255.6V260.2" stroke="#d28a1c" stroke-width="0.5"/>
<text x="224.2" y="259.79999999999995" font-size="5.3" text-anchor="middle" fill="#cf8416" stroke="#cf8416" stroke-width="0.16" >⌖</text>
<text x="239" y="259.79999999999995" font-size="5.3" text-anchor="middle" fill="#cf8416" stroke="#cf8416" stroke-width="0.16" >Ø .006 Ⓢ</text>
<text x="255.3" y="259.79999999999995" font-size="5.3" text-anchor="middle" fill="#cf8416" stroke="#cf8416" stroke-width="0.16" >B</text>
<rect x="305.40000000000003" y="242.6" width="5.8" height="8" fill="#fff" stroke="#555" stroke-width="0.6"/>
<text x="308.3" y="248.7" font-size="6" text-anchor="middle" fill="#222" stroke="#222" stroke-width="0.16" >A</text>
<path d="M308.3 250.6L308.3 258.8" stroke="#333" stroke-width="0.6"/>
<polygon points="308.3,261.3 310.1,258.2 306.5,258.2" fill="#111"/>
<rect x="295" y="261.1" width="25.2" height="8.7" fill="#f3a32f"/>
<path d="M305.4 262.3V268.6" stroke="#d28a1c" stroke-width="0.5"/>
<text x="300.2" y="267.35" font-size="5.3" text-anchor="middle" fill="#cf8416" stroke="#cf8416" stroke-width="0.16" >CF</text>
<text x="312.8" y="267.35" font-size="5.3" text-anchor="middle" fill="#cf8416" stroke="#cf8416" stroke-width="0.16" >.004</text>
<g stroke="#111" stroke-width="0.5" fill="none"><path d="M246.4 310.6l2.2 4.2 1.4-5 1.4 5 2.2-4.6-0.8 6.2-2.8 3.4-2.8-3.4zM248.6 314.8l1.4 4.8 1.4-4.8"/></g>
<text x="254.6" y="316.2" font-size="3.9" text-anchor="start" fill="#111" stroke="#111" stroke-width="0.08" textLength="20.4" lengthAdjust="spacingAndGlyphs" font-weight="bold" >HEXAGON</text>
<path d="M254.6 317.9L264 317.9" stroke="#555" stroke-width="0.5"/>
<path d="M289.3 451.2V357H420.5M337.5 357V451.2M289.3 405H337.5M289.3 423.8H420.5M289.3 438H420.5M337.5 385H420.5M360 423.8V451.2M407 423.8V438M398.8 438V451.2" stroke="#8a8a8a" stroke-width="0.6" fill="none"/>
<text x="291.6" y="363.2" font-size="3.4" text-anchor="start" fill="#333" stroke="#333" stroke-width="0.08" textLength="32.5" lengthAdjust="spacingAndGlyphs" >UNLESS OTHERWISE</text>
<text x="291.6" y="367.3" font-size="3.4" text-anchor="start" fill="#333" stroke="#333" stroke-width="0.08" textLength="40" lengthAdjust="spacingAndGlyphs" >STATED ALL DIMENSIONS</text>
<text x="291.6" y="371.3" font-size="3.4" text-anchor="start" fill="#333" stroke="#333" stroke-width="0.08" textLength="15" lengthAdjust="spacingAndGlyphs" >ARE INCH</text>
<text x="291.8" y="380.6" font-size="4.8" text-anchor="start" fill="#333" stroke="#333" stroke-width="0.16" textLength="38.2" lengthAdjust="spacingAndGlyphs" >TOLERANCES ARE:</text>
<text x="291.8" y="386" font-size="5" text-anchor="start" fill="#333" stroke="#333" stroke-width="0.16" textLength="22.6" lengthAdjust="spacingAndGlyphs" >.x = +/- .050</text>
<text x="291.8" y="391.5" font-size="5" text-anchor="start" fill="#333" stroke="#333" stroke-width="0.16" textLength="24.4" lengthAdjust="spacingAndGlyphs" >.xx = +/- .030</text>
<text x="291.8" y="397.2" font-size="5" text-anchor="start" fill="#333" stroke="#333" stroke-width="0.16" textLength="26.6" lengthAdjust="spacingAndGlyphs" >.xxx = +/- .015</text>
<text x="291.8" y="402.7" font-size="4.8" text-anchor="start" fill="#333" stroke="#333" stroke-width="0.16" textLength="33.8" lengthAdjust="spacingAndGlyphs" >ANGLES = +/- .5°</text>
<text x="291.8" y="410.6" font-size="4.8" text-anchor="start" fill="#333" stroke="#333" stroke-width="0.16" textLength="32" lengthAdjust="spacingAndGlyphs" >DIMENSIONS &amp;</text>
<text x="291.8" y="416.2" font-size="4.8" text-anchor="start" fill="#333" stroke="#333" stroke-width="0.16" textLength="39.4" lengthAdjust="spacingAndGlyphs" >TOLERANCES PER</text>
<text x="291.8" y="421.6" font-size="4.8" text-anchor="start" fill="#333" stroke="#333" stroke-width="0.16" textLength="36.2" lengthAdjust="spacingAndGlyphs" >ASME Y14.5-2009</text>
<text x="291.2" y="428.2" font-size="2.9" text-anchor="start" fill="#333" stroke="#333" stroke-width="0.08" textLength="16.5" lengthAdjust="spacingAndGlyphs" >CREATED BY:</text>
<text x="323.6" y="428.2" font-size="2.9" text-anchor="start" fill="#333" stroke="#333" stroke-width="0.08" textLength="7" lengthAdjust="spacingAndGlyphs" >DATE:</text>
<text x="291.2" y="435.4" font-size="4.6" text-anchor="start" fill="#333" stroke="#333" stroke-width="0.16" textLength="9" lengthAdjust="spacingAndGlyphs" >DAT</text>
<text x="307.4" y="435.4" font-size="4.6" text-anchor="start" fill="#333" stroke="#333" stroke-width="0.16" textLength="25.4" lengthAdjust="spacingAndGlyphs" >30-OCT-2014</text>
<text x="291.2" y="442.2" font-size="2.9" text-anchor="start" fill="#333" stroke="#333" stroke-width="0.08" textLength="17" lengthAdjust="spacingAndGlyphs" >CHECKED BY:</text>
<text x="323.6" y="442.2" font-size="2.9" text-anchor="start" fill="#333" stroke="#333" stroke-width="0.08" textLength="7" lengthAdjust="spacingAndGlyphs" >DATE:</text>
<text x="291.2" y="448.8" font-size="4.6" text-anchor="start" fill="#333" stroke="#333" stroke-width="0.16" textLength="10" lengthAdjust="spacingAndGlyphs" >NMN</text>
<text x="307.4" y="448.8" font-size="4.6" text-anchor="start" fill="#333" stroke="#333" stroke-width="0.16" textLength="26.6" lengthAdjust="spacingAndGlyphs" >17-JULY-2015</text>
<g stroke="#222" stroke-width="0.7" fill="none" stroke-linejoin="round"><path d="M354 364.4l4.6-4 3.2 9.6 1.4-7.2 4.2 3-4.4 8.4-2.6 3-1.2-3.4zM358.6 360.4l0.6 14M363.2 362.8l-4 11.6"/></g>
<text x="370" y="373" font-size="10.2" text-anchor="start" fill="#161616" stroke="#161616" stroke-width="0.16" textLength="36.4" lengthAdjust="spacingAndGlyphs" font-weight="bold" >HEXAGON</text>
<text x="370.4" y="375.6" font-size="2.2" text-anchor="start" fill="#444" stroke="#444" stroke-width="0.08" textLength="34.6" lengthAdjust="spacingAndGlyphs" >MANUFACTURING INTELLIGENCE</text>
<text x="344.5" y="382.9" font-size="3.5" text-anchor="start" fill="#333" stroke="#333" stroke-width="0.08" textLength="71.8" lengthAdjust="spacingAndGlyphs" >250 CIRCUIT DRIVE, N. KINGSTOWN, RI 02852</text>
<text x="378.8" y="399.6" font-size="6.2" text-anchor="middle" fill="#3a3a3a" stroke="#3a3a3a" stroke-width="0.16" textLength="65" lengthAdjust="spacingAndGlyphs" >HEXAGON DEMO BLOCK</text>
<text x="378.8" y="406.4" font-size="6.2" text-anchor="middle" fill="#3a3a3a" stroke="#3a3a3a" stroke-width="0.16" textLength="38.4" lengthAdjust="spacingAndGlyphs" >DTBlock - Small</text>
<text x="378.8" y="412" font-size="4.5" text-anchor="middle" fill="#3a3a3a" stroke="#3a3a3a" stroke-width="0.16" textLength="56.5" lengthAdjust="spacingAndGlyphs" >(FOR TRAINING USE ONLY)</text>
<text x="338.8" y="428.2" font-size="2.9" text-anchor="start" fill="#333" stroke="#333" stroke-width="0.08" textLength="7" lengthAdjust="spacingAndGlyphs" >SIZE:</text>
<text x="341.2" y="435.4" font-size="4.6" text-anchor="start" fill="#333" stroke="#333" stroke-width="0.16" textLength="14" lengthAdjust="spacingAndGlyphs" >ANSI A</text>
<text x="363" y="428.2" font-size="2.9" text-anchor="start" fill="#333" stroke="#333" stroke-width="0.08" textLength="11" lengthAdjust="spacingAndGlyphs" >DWG NO:</text>
<text x="375" y="435.4" font-size="4.6" text-anchor="start" fill="#333" stroke="#333" stroke-width="0.16" textLength="26.4" lengthAdjust="spacingAndGlyphs" >H020040 (M2)</text>
<text x="408.6" y="428.2" font-size="2.9" text-anchor="start" fill="#333" stroke="#333" stroke-width="0.08" textLength="5.6" lengthAdjust="spacingAndGlyphs" >REV</text>
<text x="408.6" y="435.4" font-size="4.6" text-anchor="start" fill="#333" stroke="#333" stroke-width="0.16" textLength="10.2" lengthAdjust="spacingAndGlyphs" >NEW</text>
<text x="363" y="442.2" font-size="2.9" text-anchor="start" fill="#333" stroke="#333" stroke-width="0.08" textLength="8.6" lengthAdjust="spacingAndGlyphs" >SCALE</text>
<text x="376" y="448.8" font-size="4.6" text-anchor="start" fill="#333" stroke="#333" stroke-width="0.16" textLength="9.2" lengthAdjust="spacingAndGlyphs" >1:1.5</text>
<text x="403.8" y="442.2" font-size="2.9" text-anchor="start" fill="#333" stroke="#333" stroke-width="0.08" textLength="8.6" lengthAdjust="spacingAndGlyphs" >SHEET</text>
<text x="403.8" y="448.8" font-size="4.6" text-anchor="start" fill="#333" stroke="#333" stroke-width="0.16" textLength="10.4" lengthAdjust="spacingAndGlyphs" >2 of 6</text>
<g stroke="#444" stroke-width="0.6" fill="none"><circle cx="344.6" cy="445" r="1.9"/><path d="M344.6 441.8v6.4M349.2 443h4.6l1.6 0.8v2.4l-1.6 0.8h-4.6z" stroke-dasharray="1.4 0.6"/></g>
</svg>
</body></html>
